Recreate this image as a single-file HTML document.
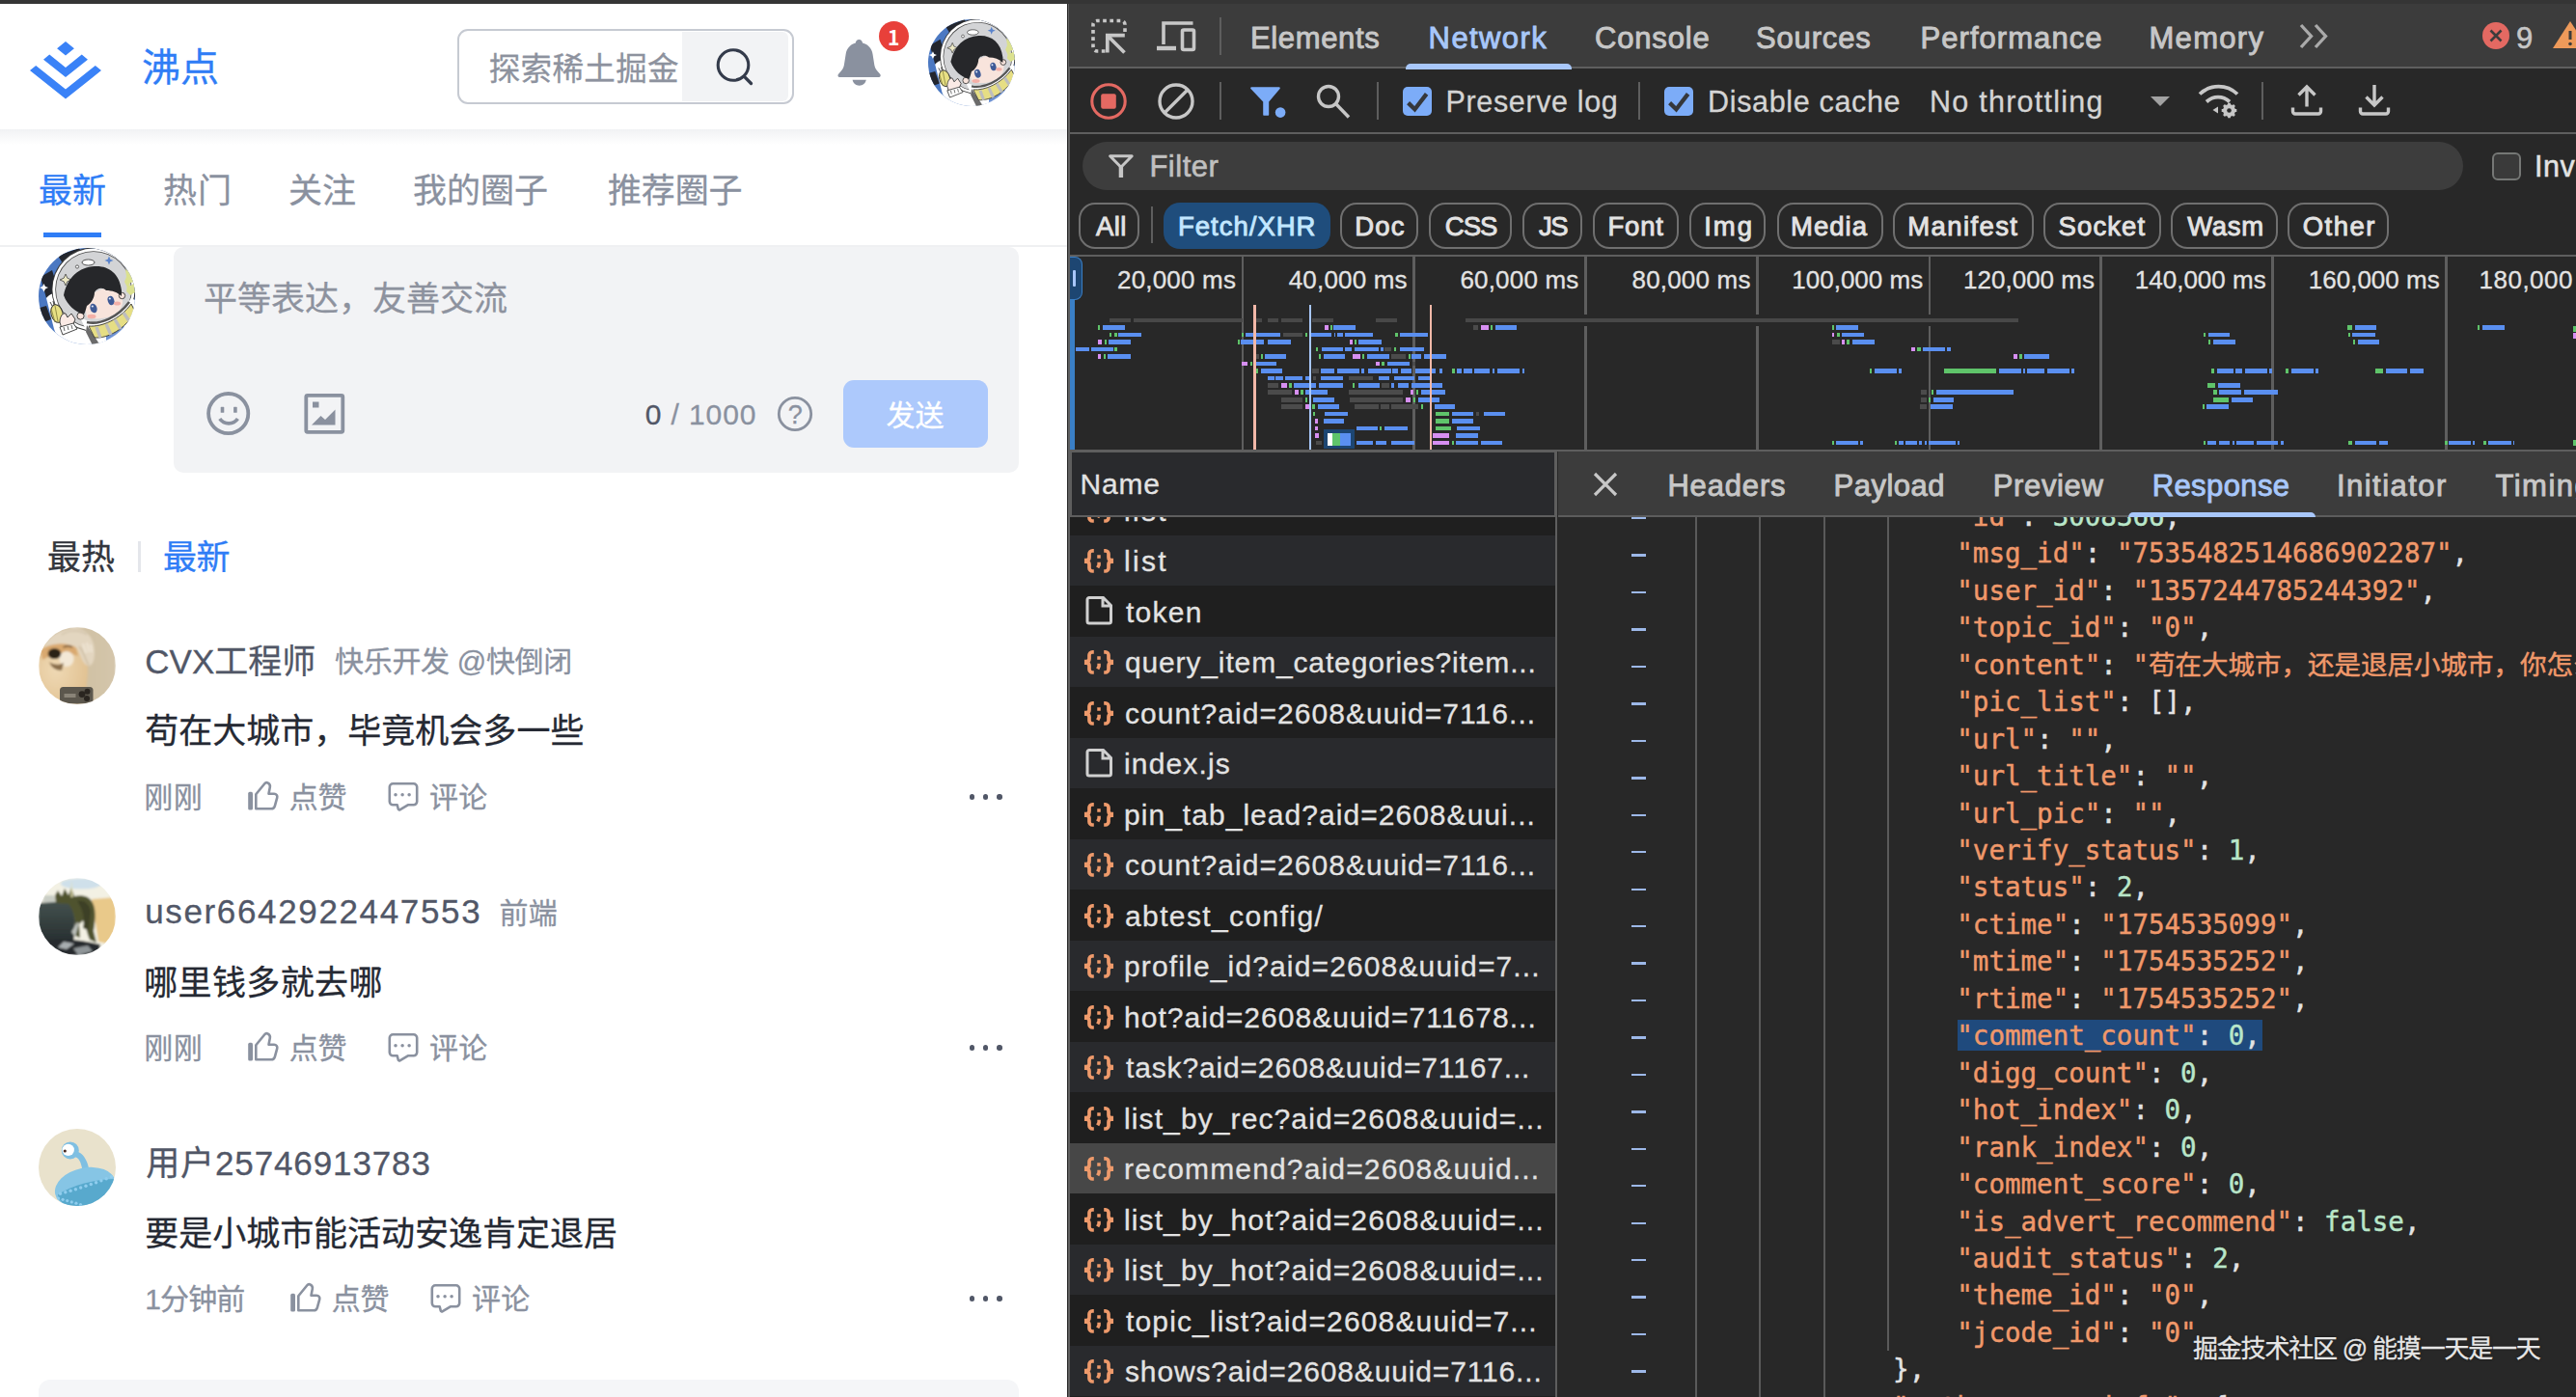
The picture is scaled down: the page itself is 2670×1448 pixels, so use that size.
<!DOCTYPE html><html lang="zh"><head><meta charset="utf-8"><title>沸点</title><style>html,body{margin:0;padding:0}body{width:2670px;height:1448px;overflow:hidden;background:#fff;position:relative}.t{position:absolute;white-space:pre;line-height:60px;height:60px;-webkit-text-stroke:.3px;font-family:'Liberation Sans','Noto Sans CJK SC',sans-serif}.m{font-family:'DejaVu Sans Mono','Liberation Mono','Noto Sans CJK SC',monospace}.k{font-family:'Noto Sans CJK SC',sans-serif}.c2{color:#515767}</style></head><body>
<div style="position:absolute;left:0;top:0;width:2670px;height:4px;background:#353535"></div>
<div style="position:absolute;left:0;top:134px;width:1106px;height:16px;background:linear-gradient(#f1f2f4,#fff)"></div>
<svg style="position:absolute;left:30.5px;top:43px" width="74" height="59.5" viewBox="0 0 35.18 28" preserveAspectRatio="none"><path fill="#3a82f7" d="M17.5875 6.77268L21.8232 3.40505L17.5875 0.00748237L17.5837 0L13.3555 3.39757L17.5837 6.76894L17.5875 6.77268ZM17.5863 17.3955H17.59L28.5161 8.77432L25.5526 6.39453L17.59 12.6808H17.5863L17.5825 12.6845L9.61993 6.40201L6.66016 8.78181L17.5825 17.3992L17.5863 17.3955ZM17.5828 23.2891L17.5865 23.2854L32.2133 11.7456L35.1768 14.1254L28.5238 19.3752L17.5865 28L0.284376 14.3574L0 14.1291L2.95977 11.7531L17.5828 23.2891Z"/></svg>
<div style="position:absolute;left:474px;top:29.5px;width:349px;height:78.5px;box-sizing:border-box;border:2.2px solid #c6cad2;border-radius:11px;background:#fff"></div>
<div style="position:absolute;left:707px;top:32.5px;width:109.5px;height:72.5px;background:#f2f3f5;border-radius:0 6px 6px 0"></div>
<svg style="position:absolute;left:736px;top:44px" width="50" height="50" viewBox="0 0 50 50"><circle cx="24" cy="23.5" r="15.8" fill="none" stroke="#343b4b" stroke-width="3.1"/><path d="M35.200 35.200 L42.500 42.500" stroke="#343b4b" stroke-width="3.300" stroke-linecap="round"/></svg>
<svg style="position:absolute;left:866px;top:39px" width="48" height="52" viewBox="0 0 48 52"><path fill="#8a919f" d="M24.400 2c2 0 3.500 1.500 3.600 3.600 5.800 1.500 9.600 5.600 10.600 11.800l1.700 10.800c.4 2.600 1.400 4.600 3.200 6.600l2.600 2.900c1.300 1.500.4 3.300-1.500 3.300H4.600c-1.900 0-2.800-1.800-1.500-3.300l2.600-2.900c1.800-2 2.800-4 3.200-6.600l1.700-10.800c1-6.200 4.800-10.300 10.200-11.800C20.900 3.500 22.400 2 24.400 2ZM17.600 43.800h14.200c-.8 3.700-3.400 5.900-7.100 5.900s-6.300-2.200-7.100-5.900Z"/></svg>
<div style="position:absolute;left:911.1px;top:22.3px;width:30.8px;height:30.8px;border-radius:50%;background:#e8403a"></div>
<svg style="position:absolute;left:962px;top:20px" width="90" height="90" viewBox="0 0 100 100"><defs><clipPath id="cb1"><circle cx="50" cy="50" r="50"/></clipPath></defs><g clip-path="url(#cb1)"><rect width="100" height="100" fill="#4b78c2"/><path d="M42 0L20 8l5 8 20-10Z" fill="#23262e"/><path d="M2 30l12-7 7 22-13 7Z" fill="#23262e"/><path d="M1 62l7-2 5 14-8 3Z" fill="#23262e"/><path d="M5.500 37l1.500 3 3 1-3 1.500-1.500 3-1.500-3-3-1.500 3-1Z" fill="#fff"/><path d="M8 52C11 48 16 46 19 48L50 74 100 72V100H22L16 84Z" fill="#fff"/><path d="M9 84l3 3 4-1-2 4 2 4-4-1-3 3Z" fill="#d9e08a"/><circle cx="57" cy="43" r="43.500" fill="#3a3a3a"/><circle cx="57" cy="43" r="42.600" fill="#fff"/><circle cx="57" cy="43" r="39.800" fill="#4a4a4a"/><circle cx="57" cy="43" r="39" fill="#d3d4d6"/><ellipse cx="51.500" cy="15" rx="6.500" ry="3" fill="#fff" stroke="#444" stroke-width=".9"/><circle cx="40" cy="19.500" r="1.600" fill="#fff" stroke="#444" stroke-width=".8"/><path d="M73 8.500l1.300 3.200 3.200 1.300-3.200 1.300-1.300 3.200-1.300-3.200-3.200-1.300 3.200-1.300Z" fill="#5b84cc"/><path d="M28 27l1.800 4.200 4.200 1.800-4.200 1.800L28 39l-1.800-4.200L22 33l4.200-1.800Z" fill="#ece8c4" stroke="#555" stroke-width=".9"/><path d="M90 22l4 3 5-1-1 6 2 5-5 1-3 5-3-6 2-5Z" fill="#dbe18f"/><path d="M92 38l4 1 3-3 1 10-5 3-4-4Z" fill="#dbe18f"/><path d="M43 72c16 10 40 2 53-20l4 2v46H56Z" fill="#fff"/><path d="M70 85c6-4 14-5 21-3l-3 12-18 3Z" fill="#6d92d4"/><path d="M50 80l8 12 6 9h-8l-7-14Z" fill="#6b6b6b"/><path d="M48 60C52 50 60 42 72 42c8 0 14 4 15 12 1 8-5 14-13 17-8 3-18 3-24 1Z" fill="#f8e4dc"/><circle cx="43.500" cy="70.500" r="3.600" fill="#f8e4dc" stroke="#333" stroke-width=".9"/><circle cx="86.500" cy="49.500" r="3.200" fill="#f8e4dc" stroke="#333" stroke-width=".9"/><ellipse cx="57" cy="62.500" rx="3.500" ry="4.900" fill="#3f5a96" transform="rotate(-18 57 62.500)"/><ellipse cx="75" cy="54.500" rx="3.300" ry="4.700" fill="#3f5a96" transform="rotate(-18 75 54.500)"/><circle cx="55.800" cy="60.500" r="1.100" fill="#dfe8f8"/><circle cx="73.800" cy="52.500" r="1.100" fill="#dfe8f8"/><ellipse cx="55" cy="71" rx="4.500" ry="2.200" fill="#f3b0a8"/><ellipse cx="81.500" cy="57.500" rx="3.600" ry="2" fill="#f3b0a8"/><path d="M26 49C30 30 42 20 58 19c14-1 26 7 28 25v6c-4-4-10-6-16-6-4-4-10-2-12 2 0 6-4 12-8 14-1 4-2 7-3 9-9-3-17-9-21-20Z" fill="#26272a"/><path d="M50 77c14 3 32-5 44-21" fill="none" stroke="#555" stroke-width="2.600"/><path d="M52 81c14 1 32-7 44-23l4 8C90 84 72 94 58 93Z" fill="#e6de84" stroke="#333" stroke-width=".9"/><path d="M60 82l4 11M70 79l5 11M79 74l6 10M88 67l6 9" stroke="#bdbdbd" stroke-width="3.400"/><ellipse cx="19" cy="68" rx="6" ry="9.500" fill="#e8e084" stroke="#333" stroke-width="1" transform="rotate(-15 19 68)"/><path d="M17 60l3 16M13 63l4 14" stroke="#8a8440" stroke-width=".9"/><path d="M12 56l2 4M15 55l1 4" stroke="#333" stroke-width=".9"/><path d="M22 77c0-6 3-10 6-9l2 4 4-4 4 6-3 7-11 3Z" fill="#fbeae5" stroke="#333" stroke-width=".9"/><path d="M22 82l14-4 4 6-15 6Z" fill="#fff" stroke="#333" stroke-width=".9"/><path d="M26 82l1 4M30 81l1 4M34 80l1 4" stroke="#555" stroke-width=".9"/></g></svg>
<div style="position:absolute;left:45px;top:240.5px;width:59.5px;height:5px;background:#2f7df6"></div>
<div style="position:absolute;left:0;top:253.5px;width:1106px;height:2px;background:#eff0f2"></div>
<svg style="position:absolute;left:40px;top:257px" width="100" height="100" viewBox="0 0 100 100"><defs><clipPath id="cb2"><circle cx="50" cy="50" r="50"/></clipPath></defs><g clip-path="url(#cb2)"><rect width="100" height="100" fill="#4b78c2"/><path d="M42 0L20 8l5 8 20-10Z" fill="#23262e"/><path d="M2 30l12-7 7 22-13 7Z" fill="#23262e"/><path d="M1 62l7-2 5 14-8 3Z" fill="#23262e"/><path d="M5.500 37l1.500 3 3 1-3 1.500-1.500 3-1.500-3-3-1.500 3-1Z" fill="#fff"/><path d="M8 52C11 48 16 46 19 48L50 74 100 72V100H22L16 84Z" fill="#fff"/><path d="M9 84l3 3 4-1-2 4 2 4-4-1-3 3Z" fill="#d9e08a"/><circle cx="57" cy="43" r="43.500" fill="#3a3a3a"/><circle cx="57" cy="43" r="42.600" fill="#fff"/><circle cx="57" cy="43" r="39.800" fill="#4a4a4a"/><circle cx="57" cy="43" r="39" fill="#d3d4d6"/><ellipse cx="51.500" cy="15" rx="6.500" ry="3" fill="#fff" stroke="#444" stroke-width=".9"/><circle cx="40" cy="19.500" r="1.600" fill="#fff" stroke="#444" stroke-width=".8"/><path d="M73 8.500l1.300 3.200 3.200 1.300-3.200 1.300-1.300 3.200-1.300-3.200-3.200-1.300 3.200-1.300Z" fill="#5b84cc"/><path d="M28 27l1.800 4.200 4.200 1.800-4.200 1.800L28 39l-1.800-4.200L22 33l4.200-1.800Z" fill="#ece8c4" stroke="#555" stroke-width=".9"/><path d="M90 22l4 3 5-1-1 6 2 5-5 1-3 5-3-6 2-5Z" fill="#dbe18f"/><path d="M92 38l4 1 3-3 1 10-5 3-4-4Z" fill="#dbe18f"/><path d="M43 72c16 10 40 2 53-20l4 2v46H56Z" fill="#fff"/><path d="M70 85c6-4 14-5 21-3l-3 12-18 3Z" fill="#6d92d4"/><path d="M50 80l8 12 6 9h-8l-7-14Z" fill="#6b6b6b"/><path d="M48 60C52 50 60 42 72 42c8 0 14 4 15 12 1 8-5 14-13 17-8 3-18 3-24 1Z" fill="#f8e4dc"/><circle cx="43.500" cy="70.500" r="3.600" fill="#f8e4dc" stroke="#333" stroke-width=".9"/><circle cx="86.500" cy="49.500" r="3.200" fill="#f8e4dc" stroke="#333" stroke-width=".9"/><ellipse cx="57" cy="62.500" rx="3.500" ry="4.900" fill="#3f5a96" transform="rotate(-18 57 62.500)"/><ellipse cx="75" cy="54.500" rx="3.300" ry="4.700" fill="#3f5a96" transform="rotate(-18 75 54.500)"/><circle cx="55.800" cy="60.500" r="1.100" fill="#dfe8f8"/><circle cx="73.800" cy="52.500" r="1.100" fill="#dfe8f8"/><ellipse cx="55" cy="71" rx="4.500" ry="2.200" fill="#f3b0a8"/><ellipse cx="81.500" cy="57.500" rx="3.600" ry="2" fill="#f3b0a8"/><path d="M26 49C30 30 42 20 58 19c14-1 26 7 28 25v6c-4-4-10-6-16-6-4-4-10-2-12 2 0 6-4 12-8 14-1 4-2 7-3 9-9-3-17-9-21-20Z" fill="#26272a"/><path d="M50 77c14 3 32-5 44-21" fill="none" stroke="#555" stroke-width="2.600"/><path d="M52 81c14 1 32-7 44-23l4 8C90 84 72 94 58 93Z" fill="#e6de84" stroke="#333" stroke-width=".9"/><path d="M60 82l4 11M70 79l5 11M79 74l6 10M88 67l6 9" stroke="#bdbdbd" stroke-width="3.400"/><ellipse cx="19" cy="68" rx="6" ry="9.500" fill="#e8e084" stroke="#333" stroke-width="1" transform="rotate(-15 19 68)"/><path d="M17 60l3 16M13 63l4 14" stroke="#8a8440" stroke-width=".9"/><path d="M12 56l2 4M15 55l1 4" stroke="#333" stroke-width=".9"/><path d="M22 77c0-6 3-10 6-9l2 4 4-4 4 6-3 7-11 3Z" fill="#fbeae5" stroke="#333" stroke-width=".9"/><path d="M22 82l14-4 4 6-15 6Z" fill="#fff" stroke="#333" stroke-width=".9"/><path d="M26 82l1 4M30 81l1 4M34 80l1 4" stroke="#555" stroke-width=".9"/></g></svg>
<div style="position:absolute;left:179.5px;top:256px;width:876.5px;height:234px;background:#f2f3f5;border-radius:10px"></div>
<svg style="position:absolute;left:212px;top:404px" width="50" height="50" viewBox="0 0 50 50"><circle cx="24.7" cy="24.6" r="20.6" fill="none" stroke="#8a919f" stroke-width="3.8"/><rect x="16.700" y="17.800" width="3.600" height="6" rx=".6" fill="#8a919f"/><rect x="30.100" y="17.800" width="3.600" height="6" rx=".6" fill="#8a919f"/><path d="M15.800 30c2.300 3.400 5.200 4.800 9.300 4.800s7-1.400 9.300-4.800" fill="none" stroke="#8a919f" stroke-width="3.700"/></svg>
<svg style="position:absolute;left:313px;top:406px" width="46" height="46" viewBox="0 0 46 46"><rect x="4.300" y="3.800" width="38" height="38" rx="1.500" fill="none" stroke="#8a919f" stroke-width="3.800"/><rect x="11" y="10.500" width="6.500" height="6" fill="#8a919f"/><path d="M10 34.500 L19.500 25 L24 29 L34.500 18.500 V34.500 Z" fill="#8a919f"/></svg>
<svg style="position:absolute;left:803px;top:408px" width="42" height="42" viewBox="0 0 42 42"><circle cx="21" cy="21" r="16.700" fill="none" stroke="#8a919f" stroke-width="2.800"/></svg>
<div style="position:absolute;left:874px;top:394px;width:150px;height:70px;background:#adc9fc;border-radius:11px"></div>
<div style="position:absolute;left:142.5px;top:561px;width:3.5px;height:32px;background:#e4e6eb"></div>
<svg style="position:absolute;left:40px;top:650px" width="80" height="80" viewBox="0 0 80 80"><defs><clipPath id="cd"><circle cx="40" cy="40" r="40"/></clipPath><linearGradient id="gd" x1="0" x2="1"><stop offset="0" stop-color="#cbb999"/><stop offset="1" stop-color="#d4c6ab"/></linearGradient><radialGradient id="gf" cx=".35" cy=".45" r=".7"><stop offset="0" stop-color="#efd9b4"/><stop offset="1" stop-color="#e0c090"/></radialGradient><filter id="bl" x="-10%" y="-10%" width="120%" height="120%"><feGaussianBlur stdDeviation="1.1"/></filter></defs><g clip-path="url(#cd)"><g filter="url(#bl)"><rect width="80" height="80" fill="url(#gd)"/><path d="M0 18C10 14 30 12 44 20c8 8 8 24 6 38l-2 22H0Z" fill="url(#gf)"/><path d="M2 24C12 17 24 15 38 19l3 11C30 25 16 26 4 34Z" fill="#d9a96f"/><ellipse cx="29" cy="33" rx="7.500" ry="8" fill="#f3e8d6"/><ellipse cx="16.500" cy="27.500" rx="6.800" ry="5.600" fill="#2b2119"/><path d="M11 36c4 3 10 4 15 1l-2 8c-6 0-11-3-13-9Z" fill="#8a6e4c"/><path d="M25.500 21c3-1.500 7-1.500 9.500 0" stroke="#4a3420" stroke-width="1.200" fill="none"/><path d="M5 21C9 10 22 2 38 1c12 1 20 11 20 25 0 8-2 14-6 14-6 0-8-10-12-18-8-6-22-6-35-1Z" fill="#e3d6c0"/><path d="M24 8c6-5 18-6 26 0" stroke="#d2c3aa" stroke-width="1.500" fill="none"/><path d="M42 20c5 5 6 14 10 19" stroke="#cdbda2" stroke-width="1.500" fill="none"/><path d="M46 17l3 10M50 16l2 10M54 18l1 8" stroke="#f1e8d8" stroke-width="1.600"/></g><rect x="22" y="62" width="34.500" height="17.500" rx="3.500" fill="#5c574d"/><path d="M26.500 69h12v4h-12Z" fill="#8a8478"/><circle cx="45" cy="69.600" r="3.400" fill="#2a2520"/><circle cx="50.500" cy="66.800" r="3" fill="#2a2520"/><circle cx="50" cy="74" r="3" fill="#2a2520"/></g></svg>
<svg style="position:absolute;left:256px;top:808px" width="34" height="34" viewBox="0 0 34 34"><rect x="1.200" y="12.800" width="4.800" height="18.800" rx="1.600" fill="#8a919f"/><path d="M9.300 30.300V15.200l9-11c.9-1.100 2.300-1.300 3.500-.6 1.600.9 2.400 2.600 2 4.500l-1.300 6.700h5.600c2.300 0 3.700 1.800 3.100 4l-2.400 8.800c-.5 1.700-1.800 2.700-3.600 2.700Z" fill="none" stroke="#8a919f" stroke-width="2.600" stroke-linejoin="round"/></svg>
<svg style="position:absolute;left:401px;top:808.5px" width="34" height="36" viewBox="0 0 34 36"><path d="M6.300 3.300h21.400a3.500 3.500 0 0 1 3.500 3.500v15a3.500 3.500 0 0 1-3.500 3.500H21.800L13.800 30.100c-.9.600-1.900.200-2.100-.800L10.700 25.300H6.300a3.500 3.500 0 0 1-3.500-3.500v-15a3.500 3.500 0 0 1 3.500-3.500Z" fill="none" stroke="#8a919f" stroke-width="2.600" stroke-linejoin="round"/><circle cx="9" cy="14.700" r="1.750" fill="#8a919f"/><circle cx="16.100" cy="14.700" r="1.750" fill="#8a919f"/><circle cx="23.100" cy="14.700" r="1.750" fill="#8a919f"/></svg>
<div style="position:absolute;left:1004.6px;top:823.3px;width:5.4px;height:5.4px;border-radius:50%;background:#515767"></div>
<div style="position:absolute;left:1018.9px;top:823.3px;width:5.4px;height:5.4px;border-radius:50%;background:#515767"></div>
<div style="position:absolute;left:1033.2px;top:823.3px;width:5.4px;height:5.4px;border-radius:50%;background:#515767"></div>
<svg style="position:absolute;left:40px;top:910px" width="80" height="80" viewBox="0 0 80 80"><defs><clipPath id="cl"><circle cx="40" cy="40" r="40"/></clipPath><linearGradient id="gw" x1="0" x2="0" y1="0" y2="1"><stop offset="0" stop-color="#44524f"/><stop offset="1" stop-color="#232a2c"/></linearGradient><filter id="bl2" x="-10%" y="-10%" width="120%" height="120%"><feGaussianBlur stdDeviation=".9"/></filter></defs><g clip-path="url(#cl)"><g filter="url(#bl2)"><rect width="80" height="80" fill="#f3f1e4"/><ellipse cx="44" cy="6" rx="21" ry="5.500" fill="#cfe0ea"/><path d="M55 22l25-2v50l-18-4Z" fill="#e9c98a"/><path d="M6 18h10l2 7H4Z" fill="#c9cdc5"/><path d="M0 26l34-2 4 20-2 26-36 2Z" fill="url(#gw)"/><path d="M17 18l3-5 4 6 3-8 4 7 3-8 3 9c8-2 15 0 18 5 5 7 4 20 2 31l3 12-7-3c-3-7-4-15-7-20l-4 4 1 14-5-2c1-14-1-26-7-33l-13-1Z" fill="#50532f"/><path d="M40 24c6-2 12 2 14 10l-2 20-6-2c2-10 0-20-6-28Z" fill="#3c4127"/><path d="M34 2l1.500 18h-2Z" fill="#e6e2b0"/><path d="M0 67c20-6 40-4 64 2l-2 11H0Z" fill="#272b2d"/><path d="M26 66l11 2-8 6-9-2Z" fill="#a8adb0"/><path d="M36 73l15-3 5 6-15 4Z" fill="#8f9598"/><path d="M34 56l6-10 2 1-4 14Z" fill="#b9bdb8"/></g></g></svg>
<svg style="position:absolute;left:256px;top:1068px" width="34" height="34" viewBox="0 0 34 34"><rect x="1.200" y="12.800" width="4.800" height="18.800" rx="1.600" fill="#8a919f"/><path d="M9.300 30.300V15.200l9-11c.9-1.100 2.300-1.300 3.500-.6 1.600.9 2.400 2.600 2 4.500l-1.300 6.700h5.600c2.300 0 3.700 1.800 3.100 4l-2.400 8.800c-.5 1.700-1.800 2.700-3.600 2.700Z" fill="none" stroke="#8a919f" stroke-width="2.600" stroke-linejoin="round"/></svg>
<svg style="position:absolute;left:401px;top:1068.5px" width="34" height="36" viewBox="0 0 34 36"><path d="M6.300 3.300h21.400a3.500 3.500 0 0 1 3.500 3.500v15a3.500 3.500 0 0 1-3.500 3.500H21.800L13.800 30.100c-.9.600-1.900.200-2.100-.800L10.700 25.300H6.300a3.500 3.500 0 0 1-3.500-3.500v-15a3.500 3.500 0 0 1 3.500-3.500Z" fill="none" stroke="#8a919f" stroke-width="2.600" stroke-linejoin="round"/><circle cx="9" cy="14.700" r="1.750" fill="#8a919f"/><circle cx="16.100" cy="14.700" r="1.750" fill="#8a919f"/><circle cx="23.100" cy="14.700" r="1.750" fill="#8a919f"/></svg>
<div style="position:absolute;left:1004.6px;top:1083.3px;width:5.4px;height:5.4px;border-radius:50%;background:#515767"></div>
<div style="position:absolute;left:1018.9px;top:1083.3px;width:5.4px;height:5.4px;border-radius:50%;background:#515767"></div>
<div style="position:absolute;left:1033.2px;top:1083.3px;width:5.4px;height:5.4px;border-radius:50%;background:#515767"></div>
<svg style="position:absolute;left:40px;top:1170px" width="80" height="80" viewBox="0 0 80 80"><defs><clipPath id="ca"><circle cx="40" cy="40" r="40"/></clipPath></defs><g clip-path="url(#ca)"><rect width="80" height="80" fill="#e9e2cc"/><path d="M36 29c6 0 8 6 9.500 14h7C51 35 48 27 41 24Z" fill="#7fbfe2"/><circle cx="32.800" cy="22.400" r="9" fill="#7fbfe2"/><circle cx="30.700" cy="21.900" r="6.200" fill="#fff"/><circle cx="27.300" cy="23" r="1.600" fill="#4a2a20"/><ellipse cx="48.500" cy="61" rx="32" ry="20.500" fill="#86c5e5" transform="rotate(-12 48.500 61)"/><path d="M20 68C36 58 60 52 80 52c2 14-14 30-36 30-14 0-24-6-24-14Z" fill="#58a9cd"/><circle cx="22.5" cy="67.3" r="1.700" fill="#8fcdee"/><circle cx="27.8" cy="65.8" r="1.700" fill="#8fcdee"/><circle cx="33.1" cy="64.3" r="1.700" fill="#8fcdee"/><circle cx="38.4" cy="62.7" r="1.700" fill="#8fcdee"/><circle cx="43.7" cy="61.0" r="1.700" fill="#8fcdee"/><circle cx="49.0" cy="59.3" r="1.700" fill="#8fcdee"/><circle cx="54.3" cy="57.5" r="1.700" fill="#8fcdee"/><circle cx="59.6" cy="55.7" r="1.700" fill="#8fcdee"/><circle cx="64.9" cy="53.8" r="1.700" fill="#8fcdee"/><circle cx="70.2" cy="51.8" r="1.700" fill="#8fcdee"/><circle cx="75.5" cy="49.8" r="1.700" fill="#8fcdee"/><circle cx="20.5" cy="72.0" r="1.600" fill="#8fcdee"/><circle cx="25.1" cy="73.3" r="1.600" fill="#8fcdee"/><circle cx="29.7" cy="74.6" r="1.600" fill="#8fcdee"/><circle cx="34.3" cy="75.9" r="1.600" fill="#8fcdee"/><circle cx="38.9" cy="77.2" r="1.600" fill="#8fcdee"/><circle cx="43.5" cy="78.5" r="1.600" fill="#8fcdee"/></g></svg>
<svg style="position:absolute;left:300px;top:1328px" width="34" height="34" viewBox="0 0 34 34"><rect x="1.200" y="12.800" width="4.800" height="18.800" rx="1.600" fill="#8a919f"/><path d="M9.300 30.300V15.200l9-11c.9-1.100 2.300-1.300 3.500-.6 1.600.9 2.400 2.600 2 4.500l-1.300 6.700h5.600c2.300 0 3.700 1.800 3.100 4l-2.400 8.800c-.5 1.700-1.800 2.700-3.600 2.700Z" fill="none" stroke="#8a919f" stroke-width="2.600" stroke-linejoin="round"/></svg>
<svg style="position:absolute;left:445px;top:1328.5px" width="34" height="36" viewBox="0 0 34 36"><path d="M6.300 3.300h21.400a3.500 3.500 0 0 1 3.500 3.500v15a3.500 3.500 0 0 1-3.500 3.500H21.800L13.800 30.100c-.9.600-1.900.200-2.100-.800L10.700 25.300H6.300a3.500 3.500 0 0 1-3.500-3.500v-15a3.500 3.500 0 0 1 3.500-3.500Z" fill="none" stroke="#8a919f" stroke-width="2.600" stroke-linejoin="round"/><circle cx="9" cy="14.700" r="1.750" fill="#8a919f"/><circle cx="16.100" cy="14.700" r="1.750" fill="#8a919f"/><circle cx="23.100" cy="14.700" r="1.750" fill="#8a919f"/></svg>
<div style="position:absolute;left:1004.6px;top:1343.3px;width:5.4px;height:5.4px;border-radius:50%;background:#515767"></div>
<div style="position:absolute;left:1018.9px;top:1343.3px;width:5.4px;height:5.4px;border-radius:50%;background:#515767"></div>
<div style="position:absolute;left:1033.2px;top:1343.3px;width:5.4px;height:5.4px;border-radius:50%;background:#515767"></div>
<div style="position:absolute;left:40px;top:1430px;width:1016px;height:40px;background:#f5f6f8;border-radius:12px"></div>
<div class="t" style="left:147.0px;top:39.5px;color:#2f7df6;font-size:40px;">沸点</div>
<div class="t" style="left:506.7px;top:42.0px;color:#8d929e;font-size:32.5px;letter-spacing:0.380px;">探索稀土掘金</div>
<div class="t k" style="left:919.9px;top:8.1px;color:#fff;font-size:21px;font-weight:700;-webkit-text-stroke:0;">1</div>
<div class="t" style="left:40.0px;top:168.0px;color:#2f7df6;font-size:35px;">最新</div>
<div class="t" style="left:169.0px;top:168.0px;color:#8a919f;font-size:35px;letter-spacing:1.000px;">热门</div>
<div class="t" style="left:299.0px;top:168.0px;color:#8a919f;font-size:35px;">关注</div>
<div class="t" style="left:428.0px;top:168.0px;color:#8a919f;font-size:35px;">我的圈子</div>
<div class="t" style="left:630.0px;top:168.0px;color:#8a919f;font-size:35px;letter-spacing:-0.167px;">推荐圈子</div>
<div class="t" style="left:211.0px;top:280.0px;color:#8d929e;font-size:35px;">平等表达，友善交流</div>
<div class="t" style="left:668.8px;top:399.8px;color:#8a919f;font-size:30px;letter-spacing:0.886px;"><span class="c2">0</span> / 1000</div>
<div class="t" style="left:816.7px;top:399.8px;color:#8a919f;font-size:27px;">?</div>
<div class="t" style="left:918.5px;top:400.5px;color:#fff;font-size:30px;">发送</div>
<div class="t" style="left:49.0px;top:548.0px;color:#33363d;font-size:35px;">最热</div>
<div class="t" style="left:169.0px;top:548.0px;color:#2f7df6;font-size:35px;letter-spacing:-0.500px;">最新</div>
<div class="t" style="left:150.2px;top:656.1px;color:#515767;font-size:35px;letter-spacing:0.040px;">CVX工程师</div>
<div class="t" style="left:347.0px;top:656.2px;color:#8a919f;font-size:30px;letter-spacing:-0.312px;">快乐开发 @快倒闭</div>
<div class="t" style="left:150.2px;top:728.0px;color:#252933;font-size:35px;letter-spacing:0.017px;">苟在大城市，毕竟机会多一些</div>
<div class="t" style="left:149.2px;top:797.3px;color:#8a919f;font-size:30px;letter-spacing:0.600px;">刚刚</div>
<div class="t" style="left:299.7px;top:797.3px;color:#8a919f;font-size:30px;letter-spacing:-0.100px;">点赞</div>
<div class="t" style="left:445.0px;top:797.3px;color:#8a919f;font-size:30px;letter-spacing:0.300px;">评论</div>
<div class="t" style="left:150.2px;top:914.6px;color:#515767;font-size:35px;letter-spacing:1.644px;">user6642922447553</div>
<div class="t" style="left:517.4px;top:916.7px;color:#8a919f;font-size:30px;letter-spacing:0.300px;">前端</div>
<div class="t" style="left:149.2px;top:988.5px;color:#252933;font-size:35px;letter-spacing:0.367px;">哪里钱多就去哪</div>
<div class="t" style="left:149.2px;top:1057.3px;color:#8a919f;font-size:30px;letter-spacing:0.600px;">刚刚</div>
<div class="t" style="left:299.7px;top:1057.3px;color:#8a919f;font-size:30px;letter-spacing:-0.100px;">点赞</div>
<div class="t" style="left:445.0px;top:1057.3px;color:#8a919f;font-size:30px;letter-spacing:0.300px;">评论</div>
<div class="t" style="left:151.2px;top:1176.1px;color:#515767;font-size:35px;letter-spacing:0.883px;">用户25746913783</div>
<div class="t" style="left:150.2px;top:1248.5px;color:#252933;font-size:35px;letter-spacing:-0.015px;">要是小城市能活动安逸肯定退居</div>
<div class="t" style="left:150.2px;top:1317.3px;color:#8a919f;font-size:30px;letter-spacing:-0.867px;">1分钟前</div>
<div class="t" style="left:343.7px;top:1317.3px;color:#8a919f;font-size:30px;letter-spacing:-0.100px;">点赞</div>
<div class="t" style="left:489.0px;top:1317.3px;color:#8a919f;font-size:30px;letter-spacing:0.300px;">评论</div>
<div style="position:absolute;left:1106px;top:4px;width:1564px;height:1444px;background:#282828;"></div>
<div style="position:absolute;left:1107px;top:4px;width:2px;height:1444px;background:#606060;"></div>
<div style="position:absolute;left:1108px;top:4px;width:1562px;height:65.5px;background:#3c3c3c;"></div>
<div style="position:absolute;left:1108px;top:69.3px;width:1562px;height:2px;background:#5e5e5e;"></div>
<div style="position:absolute;left:1108px;top:137px;width:1562px;height:2px;background:#5e5e5e;"></div>
<div style="position:absolute;left:1108px;top:263.5px;width:1562px;height:2px;background:#5e5e5e;"></div>
<svg style="position:absolute;left:1128px;top:16px" width="44" height="44" viewBox="0 0 44 44" fill="none" stroke="#c7c7c7"><path d="M17.500 37H9a4 4 0 0 1-4-4V9.500a4 4 0 0 1 4-4h25a4 4 0 0 1 4 4V17" stroke-width="3.600" stroke-dasharray="3.700 3.500"/><path d="M20 21l17.500 17.500M19.800 38.500V20.600h18" stroke-width="3.700"/></svg>
<svg style="position:absolute;left:1196px;top:18px" width="48" height="40" viewBox="0 0 48 40" fill="none" stroke="#c7c7c7" stroke-width="3.600"><path d="M10 28V6h30.500"/><path d="M3 32h20" stroke-width="4.400"/><rect x="29.500" y="13" width="12" height="20.500" rx="1.500"/></svg>
<div style="position:absolute;left:1264px;top:18px;width:2px;height:38.5px;background:#5e5e5e;"></div>
<div style="position:absolute;left:1457px;top:66px;width:171.5px;height:5.5px;background:#a8c7fa;border-radius:5px 5px 0 0"></div>
<svg style="position:absolute;left:2380px;top:22px" width="40" height="32" viewBox="0 0 40 32" fill="none" stroke="#aaa" stroke-width="3.300"><path d="M5 4l10.500 11.500L5 27M20 4l10.500 11.500L20 27"/></svg>
<svg style="position:absolute;left:2572px;top:22px" width="30" height="30" viewBox="0 0 30 30"><circle cx="15" cy="15" r="14" fill="#e46962"/><path d="M9.500 9.500l11 11M20.500 9.500l-11 11" stroke="#3c3c3c" stroke-width="2.600"/></svg>
<svg style="position:absolute;left:2644px;top:20px" width="40" height="32" viewBox="0 0 40 32"><path d="M20 2L38 30H2Z" fill="#ee9a5a"/><path d="M20 12v9" stroke="#3c3c3c" stroke-width="3"/><circle cx="20" cy="25.500" r="1.800" fill="#3c3c3c"/></svg>
<svg style="position:absolute;left:1128px;top:84px" width="42" height="42" viewBox="0 0 42 42"><circle cx="21" cy="21" r="17.200" fill="none" stroke="#e46962" stroke-width="3.100"/><rect x="13.200" y="13.200" width="15.600" height="15.600" rx="2" fill="#e46962"/></svg>
<svg style="position:absolute;left:1198px;top:84px" width="42" height="42" viewBox="0 0 42 42" fill="none" stroke="#c7c7c7" stroke-width="3.400"><circle cx="21" cy="21" r="17"/><path d="M9 33L33 9"/></svg>
<div style="position:absolute;left:1264px;top:85px;width:2px;height:39px;background:#5e5e5e;"></div>
<svg style="position:absolute;left:1294px;top:88px" width="40" height="36" viewBox="0 0 40 36"><path d="M3.300 2.200h28.400c1 0 1.500 1 .9 1.800L21.200 17.500V31c0 .4-.3.700-.7.700h-4.600c-.4 0-.7-.3-.7-.7V17.500L2.400 4C1.800 3.200 2.300 2.200 3.300 2.200Z" fill="#7cacf8"/><circle cx="33.100" cy="28.600" r="5.300" fill="#7cacf8"/></svg>
<svg style="position:absolute;left:1360px;top:84px" width="44" height="44" viewBox="0 0 44 44" fill="none" stroke="#c7c7c7" stroke-width="3.400"><circle cx="17" cy="16" r="10.500"/><path d="M24.500 23.500L38 37.500"/></svg>
<div style="position:absolute;left:1427px;top:85px;width:2px;height:39px;background:#5e5e5e;"></div>
<svg style="position:absolute;left:1454px;top:90px" width="30" height="30" viewBox="0 0 30 30"><rect width="30" height="30" rx="5" fill="#7cacf8"/><path d="M5.600 16.600l6.800 6.600L24.600 7.400" fill="none" stroke="#35373b" stroke-width="4.300"/></svg>
<svg style="position:absolute;left:1725px;top:90px" width="30" height="30" viewBox="0 0 30 30"><rect width="30" height="30" rx="5" fill="#7cacf8"/><path d="M5.600 16.600l6.800 6.600L24.600 7.400" fill="none" stroke="#35373b" stroke-width="4.300"/></svg>
<div style="position:absolute;left:1698px;top:85px;width:2px;height:39px;background:#5e5e5e;"></div>
<svg style="position:absolute;left:2229px;top:100px" width="20" height="10" viewBox="0 0 20 10"><path d="M0 0h20L10 10Z" fill="#a2a2a2"/></svg>
<svg style="position:absolute;left:2277px;top:84px" width="46" height="42" viewBox="0 0 46 42"><g fill="none" stroke="#c7c7c7" stroke-width="3.400"><path d="M3 13.500c11-10.500 28-10.500 39 0" stroke-width="3.800"/><path d="M10 21.500c7-6.500 17-6.500 24 0" stroke-width="3.800"/></g><path d="M16.500 30l5.500-3.500v7Z" fill="#c7c7c7"/><circle cx="33.500" cy="30.500" r="4.800" fill="none" stroke="#c7c7c7" stroke-width="3.400"/><path d="M33.500 22.700v15.600M25.700 30.500h15.600M28 25l11 11M39 25l-11 11" stroke="#c7c7c7" stroke-width="2.800"/><circle cx="33.500" cy="30.500" r="2.300" fill="#282828"/></svg>
<div style="position:absolute;left:2344px;top:85px;width:2px;height:39px;background:#5e5e5e;"></div>
<svg style="position:absolute;left:2373px;top:86px" width="36" height="36" viewBox="0 0 36 36" fill="none" stroke="#c7c7c7" stroke-width="3.400"><path d="M18 24.500V4M9.500 12.500L18 4l8.500 8.500M3.500 25.500v4a2.500 2.500 0 0 0 2.500 2.500h24a2.500 2.500 0 0 0 2.500-2.500v-4"/></svg>
<svg style="position:absolute;left:2443px;top:86px" width="36" height="36" viewBox="0 0 36 36" fill="none" stroke="#c7c7c7" stroke-width="3.400"><path d="M18 2v20.500M9.500 14.500L18 23l8.500-8.500M3.500 25.500v4a2.500 2.500 0 0 0 2.500 2.500h24a2.500 2.500 0 0 0 2.500-2.500v-4"/></svg>
<div style="position:absolute;left:1121.5px;top:146.8px;width:1431px;height:50.2px;background:#3d3d3d;border-radius:26px"></div>
<svg style="position:absolute;left:1147px;top:158px" width="28" height="28" viewBox="0 0 28 28" fill="none" stroke="#c7c7c7" stroke-width="3"><path d="M3.600 3.700h22.600L14.900 15.200Z" stroke-linejoin="round"/><path d="M14.900 13v13" stroke-width="4.400"/></svg>
<div style="position:absolute;left:2582.7px;top:157.8px;width:30px;height:29px;background:#3a3a3a;box-sizing:border-box;border:2.500px solid #757775;border-radius:6px"></div>
<div style="position:absolute;left:1118px;top:210.3px;width:63px;height:47.6px;background:transparent;box-sizing:border-box;border:2.200px solid #6f6f6f;border-radius:17px"></div>
<div style="position:absolute;left:1206px;top:210.3px;width:172.5999999999999px;height:47.6px;background:#1f4d7c;border-radius:17px"></div>
<div style="position:absolute;left:1389px;top:210.3px;width:81px;height:47.6px;background:transparent;box-sizing:border-box;border:2.200px solid #6f6f6f;border-radius:17px"></div>
<div style="position:absolute;left:1481px;top:210.3px;width:86px;height:47.6px;background:transparent;box-sizing:border-box;border:2.200px solid #6f6f6f;border-radius:17px"></div>
<div style="position:absolute;left:1578px;top:210.3px;width:62px;height:47.6px;background:transparent;box-sizing:border-box;border:2.200px solid #6f6f6f;border-radius:17px"></div>
<div style="position:absolute;left:1651px;top:210.3px;width:89px;height:47.6px;background:transparent;box-sizing:border-box;border:2.200px solid #6f6f6f;border-radius:17px"></div>
<div style="position:absolute;left:1751px;top:210.3px;width:79px;height:47.6px;background:transparent;box-sizing:border-box;border:2.200px solid #6f6f6f;border-radius:17px"></div>
<div style="position:absolute;left:1841.6px;top:210.3px;width:110.10000000000014px;height:47.6px;background:transparent;box-sizing:border-box;border:2.200px solid #6f6f6f;border-radius:17px"></div>
<div style="position:absolute;left:1962px;top:210.3px;width:145.5999999999999px;height:47.6px;background:transparent;box-sizing:border-box;border:2.200px solid #6f6f6f;border-radius:17px"></div>
<div style="position:absolute;left:2118.4px;top:210.3px;width:121.19999999999982px;height:47.6px;background:transparent;box-sizing:border-box;border:2.200px solid #6f6f6f;border-radius:17px"></div>
<div style="position:absolute;left:2250px;top:210.3px;width:110.69999999999982px;height:47.6px;background:transparent;box-sizing:border-box;border:2.200px solid #6f6f6f;border-radius:17px"></div>
<div style="position:absolute;left:2371px;top:210.3px;width:105px;height:47.6px;background:transparent;box-sizing:border-box;border:2.200px solid #6f6f6f;border-radius:17px"></div>
<div style="position:absolute;left:1192.5px;top:214px;width:2px;height:38px;background:#5e5e5e;"></div>
<div class="t" style="left:1296.0px;top:9.7px;color:#c7c7c7;font-size:31px;letter-spacing:0.643px;-webkit-text-stroke:.9px;">Elements</div>
<div class="t" style="left:1480.6px;top:9.7px;color:#a8c7fa;font-size:31px;letter-spacing:1.400px;-webkit-text-stroke:.9px;">Network</div>
<div class="t" style="left:1653.0px;top:9.7px;color:#c7c7c7;font-size:31px;letter-spacing:0.833px;-webkit-text-stroke:.9px;">Console</div>
<div class="t" style="left:1820.0px;top:9.7px;color:#c7c7c7;font-size:31px;letter-spacing:0.833px;-webkit-text-stroke:.9px;">Sources</div>
<div class="t" style="left:1990.5px;top:9.7px;color:#c7c7c7;font-size:31px;letter-spacing:1.050px;-webkit-text-stroke:.9px;">Performance</div>
<div class="t" style="left:2227.5px;top:9.7px;color:#c7c7c7;font-size:31px;letter-spacing:1.300px;-webkit-text-stroke:.9px;">Memory</div>
<div class="t" style="left:2608.0px;top:9.7px;color:#c7c7c7;font-size:31px;-webkit-text-stroke:.6px;">9</div>
<div class="t" style="left:1498.6px;top:75.2px;color:#d4d4d4;font-size:30.5px;letter-spacing:0.627px;">Preserve log</div>
<div class="t" style="left:1770.0px;top:75.2px;color:#d4d4d4;font-size:30.5px;letter-spacing:0.667px;">Disable cache</div>
<div class="t" style="left:2000.0px;top:75.2px;color:#d4d4d4;font-size:30.5px;letter-spacing:1.250px;">No throttling</div>
<div class="t" style="left:1191.4px;top:142.8px;color:#c0c0c0;font-size:31px;letter-spacing:0.520px;-webkit-text-stroke:.6px;">Filter</div>
<div class="t" style="left:2627.0px;top:141.7px;color:#e3e3e3;font-size:30.5px;letter-spacing:0.500px;-webkit-text-stroke:.5px;">Inv</div>
<div class="t" style="left:1136.0px;top:204.6px;color:#e3e3e3;font-size:27.5px;letter-spacing:0.400px;-webkit-text-stroke:0.9px;">All</div>
<div class="t" style="left:1220.9px;top:204.6px;color:#c2e7ff;font-size:27.5px;letter-spacing:1.012px;-webkit-text-stroke:0.9px;">Fetch/XHR</div>
<div class="t" style="left:1404.2px;top:204.6px;color:#e3e3e3;font-size:27.5px;letter-spacing:1.200px;-webkit-text-stroke:0.9px;">Doc</div>
<div class="t" style="left:1497.7px;top:204.6px;color:#e3e3e3;font-size:27.5px;letter-spacing:-0.900px;-webkit-text-stroke:0.9px;">CSS</div>
<div class="t" style="left:1595.0px;top:204.6px;color:#e3e3e3;font-size:27.5px;letter-spacing:-1.500px;-webkit-text-stroke:0.9px;">JS</div>
<div class="t" style="left:1666.6px;top:204.6px;color:#e3e3e3;font-size:27.5px;letter-spacing:0.733px;-webkit-text-stroke:0.9px;">Font</div>
<div class="t" style="left:1766.2px;top:204.6px;color:#e3e3e3;font-size:27.5px;letter-spacing:2.000px;-webkit-text-stroke:0.9px;">Img</div>
<div class="t" style="left:1856.0px;top:204.6px;color:#e3e3e3;font-size:27.5px;letter-spacing:1.025px;-webkit-text-stroke:0.9px;">Media</div>
<div class="t" style="left:1977.2px;top:204.6px;color:#e3e3e3;font-size:27.5px;letter-spacing:1.400px;-webkit-text-stroke:0.9px;">Manifest</div>
<div class="t" style="left:2133.6px;top:204.6px;color:#e3e3e3;font-size:27.5px;letter-spacing:1.080px;-webkit-text-stroke:0.9px;">Socket</div>
<div class="t" style="left:2267.2px;top:204.6px;color:#e3e3e3;font-size:27.5px;letter-spacing:0.667px;-webkit-text-stroke:0.9px;">Wasm</div>
<div class="t" style="left:2386.7px;top:204.6px;color:#e3e3e3;font-size:27.5px;letter-spacing:1.475px;-webkit-text-stroke:0.9px;">Other</div>
<div style="position:absolute;left:1286.7px;top:266px;width:2.6px;height:200px;background:#5e5e5e;"></div>
<div style="position:absolute;left:1464.4px;top:266px;width:2.6px;height:200px;background:#5e5e5e;"></div>
<div style="position:absolute;left:1642.1000000000001px;top:266px;width:2.6px;height:200px;background:#5e5e5e;"></div>
<div style="position:absolute;left:1820.2px;top:266px;width:2.6px;height:200px;background:#5e5e5e;"></div>
<div style="position:absolute;left:1998.5px;top:266px;width:2.6px;height:200px;background:#5e5e5e;"></div>
<div style="position:absolute;left:2176.2999999999997px;top:266px;width:2.6px;height:200px;background:#5e5e5e;"></div>
<div style="position:absolute;left:2354.0px;top:266px;width:2.6px;height:200px;background:#5e5e5e;"></div>
<div style="position:absolute;left:2534.0px;top:266px;width:2.6px;height:200px;background:#5e5e5e;"></div>
<svg style="position:absolute;left:0;top:0" width="2670" height="470" viewBox="0 0 2670 470" shape-rendering="crispEdges"><rect x="1149.7" y="329.7" width="22.4" height="4.600" fill="#484848"/><rect x="1175.2" y="329.7" width="112.7" height="4.600" fill="#484848"/><rect x="1301.9" y="329.7" width="5.6" height="4.600" fill="#484848"/><rect x="1314.3" y="329.7" width="10.9" height="4.600" fill="#484848"/><rect x="1328.3" y="329.7" width="21.7" height="4.600" fill="#484848"/><rect x="1360.2" y="329.7" width="21.7" height="4.600" fill="#484848"/><rect x="1426.1" y="329.7" width="21.7" height="4.600" fill="#484848"/><rect x="1518.6" y="329.7" width="351.6" height="4.600" fill="#484848"/><rect x="1137.9" y="337.2" width="1.9" height="4.600" fill="#5fc46a"/><rect x="1142.9" y="337.2" width="23.0" height="4.600" fill="#5a8ff0"/><rect x="1373.3" y="337.2" width="3.7" height="4.600" fill="#d78ff2"/><rect x="1378.9" y="337.2" width="1.6" height="4.600" fill="#5fc46a"/><rect x="1382.0" y="337.2" width="23.0" height="4.600" fill="#5a8ff0"/><rect x="1527.0" y="337.2" width="5.3" height="4.600" fill="#4b4b4b"/><rect x="1534.8" y="337.2" width="7.8" height="4.600" fill="#d78ff2"/><rect x="1545.3" y="337.2" width="1.9" height="4.600" fill="#5fc46a"/><rect x="1549.7" y="337.2" width="22.4" height="4.600" fill="#5a8ff0"/><rect x="1150.3" y="344.6" width="1.6" height="4.600" fill="#5fc46a"/><rect x="1155.3" y="344.6" width="2.5" height="4.600" fill="#5fc46a"/><rect x="1159.0" y="344.6" width="23.6" height="4.600" fill="#5a8ff0"/><rect x="1287.3" y="344.6" width="1.6" height="4.600" fill="#5fc46a"/><rect x="1291.0" y="344.6" width="35.7" height="4.600" fill="#5a8ff0"/><rect x="1329.8" y="344.6" width="20.2" height="4.600" fill="#4b4b4b"/><rect x="1353.1" y="344.6" width="1.6" height="4.600" fill="#5fc46a"/><rect x="1357.8" y="344.6" width="21.7" height="4.600" fill="#5a8ff0"/><rect x="1382.6" y="344.6" width="1.6" height="4.600" fill="#5a8ff0"/><rect x="1385.7" y="344.6" width="6.2" height="4.600" fill="#5a8ff0"/><rect x="1393.5" y="344.6" width="29.5" height="4.600" fill="#5a8ff0"/><rect x="1446.3" y="344.6" width="2.2" height="4.600" fill="#5fc46a"/><rect x="1450.9" y="344.6" width="28.6" height="4.600" fill="#5a8ff0"/><rect x="1137.9" y="352.1" width="4.0" height="4.600" fill="#d78ff2"/><rect x="1145.0" y="352.1" width="1.6" height="4.600" fill="#5fc46a"/><rect x="1149.1" y="352.1" width="23.0" height="4.600" fill="#5a8ff0"/><rect x="1283.2" y="352.1" width="1.9" height="4.600" fill="#5fc46a"/><rect x="1286.3" y="352.1" width="23.6" height="4.600" fill="#5a8ff0"/><rect x="1314.3" y="352.1" width="23.3" height="4.600" fill="#5a8ff0"/><rect x="1398.8" y="352.1" width="3.1" height="4.600" fill="#d78ff2"/><rect x="1404.3" y="352.1" width="1.9" height="4.600" fill="#5fc46a"/><rect x="1408.1" y="352.1" width="23.6" height="4.600" fill="#5a8ff0"/><rect x="1114.9" y="359.6" width="13.7" height="4.600" fill="#5a8ff0"/><rect x="1131.1" y="359.6" width="22.4" height="4.600" fill="#5a8ff0"/><rect x="1155.3" y="359.6" width="2.5" height="4.600" fill="#5fc46a"/><rect x="1364.0" y="359.6" width="1.9" height="4.600" fill="#5fc46a"/><rect x="1370.2" y="359.6" width="21.7" height="4.600" fill="#5a8ff0"/><rect x="1394.4" y="359.6" width="6.8" height="4.600" fill="#5a8ff0"/><rect x="1404.3" y="359.6" width="24.8" height="4.600" fill="#5a8ff0"/><rect x="1431.1" y="359.6" width="2.8" height="4.600" fill="#5a8ff0"/><rect x="1435.4" y="359.6" width="6.2" height="4.600" fill="#4b4b4b"/><rect x="1444.7" y="359.6" width="2.5" height="4.600" fill="#5fc46a"/><rect x="1450.9" y="359.6" width="24.8" height="4.600" fill="#5a8ff0"/><rect x="1137.9" y="367.1" width="3.1" height="4.600" fill="#d78ff2"/><rect x="1144.1" y="367.1" width="1.9" height="4.600" fill="#5fc46a"/><rect x="1148.4" y="367.1" width="23.6" height="4.600" fill="#5a8ff0"/><rect x="1301.9" y="367.1" width="3.1" height="4.600" fill="#4b4b4b"/><rect x="1306.5" y="367.1" width="2.2" height="4.600" fill="#5fc46a"/><rect x="1310.6" y="367.1" width="22.4" height="4.600" fill="#5a8ff0"/><rect x="1367.1" y="367.1" width="1.9" height="4.600" fill="#5fc46a"/><rect x="1371.7" y="367.1" width="22.7" height="4.600" fill="#5a8ff0"/><rect x="1401.9" y="367.1" width="7.8" height="4.600" fill="#d78ff2"/><rect x="1412.1" y="367.1" width="2.2" height="4.600" fill="#5fc46a"/><rect x="1416.8" y="367.1" width="23.3" height="4.600" fill="#5a8ff0"/><rect x="1441.6" y="367.1" width="15.5" height="4.600" fill="#4b4b4b"/><rect x="1459.6" y="367.1" width="1.9" height="4.600" fill="#5fc46a"/><rect x="1463.4" y="367.1" width="9.3" height="4.600" fill="#5a8ff0"/><rect x="1476.4" y="367.1" width="22.7" height="4.600" fill="#5a8ff0"/><rect x="1287.3" y="374.5" width="5.9" height="4.600" fill="#d78ff2"/><rect x="1295.7" y="374.5" width="1.9" height="4.600" fill="#5fc46a"/><rect x="1300.3" y="374.5" width="22.7" height="4.600" fill="#5a8ff0"/><rect x="1426.1" y="374.5" width="3.7" height="4.600" fill="#d78ff2"/><rect x="1432.3" y="374.5" width="3.1" height="4.600" fill="#5fc46a"/><rect x="1437.9" y="374.5" width="23.0" height="4.600" fill="#5a8ff0"/><rect x="1464.0" y="374.5" width="2.5" height="4.600" fill="#4b4b4b"/><rect x="1301.9" y="382.0" width="2.2" height="4.600" fill="#5fc46a"/><rect x="1306.5" y="382.0" width="22.7" height="4.600" fill="#5a8ff0"/><rect x="1360.2" y="382.0" width="6.8" height="4.600" fill="#4b4b4b"/><rect x="1368.6" y="382.0" width="14.6" height="4.600" fill="#5a8ff0"/><rect x="1385.7" y="382.0" width="23.3" height="4.600" fill="#5a8ff0"/><rect x="1410.6" y="382.0" width="3.7" height="4.600" fill="#5a8ff0"/><rect x="1418.3" y="382.0" width="23.3" height="4.600" fill="#5a8ff0"/><rect x="1443.2" y="382.0" width="6.2" height="4.600" fill="#5a8ff0"/><rect x="1451.6" y="382.0" width="11.8" height="4.600" fill="#5a8ff0"/><rect x="1466.5" y="382.0" width="21.7" height="4.600" fill="#5a8ff0"/><rect x="1491.9" y="382.0" width="3.1" height="4.600" fill="#5a8ff0"/><rect x="1505.3" y="382.0" width="2.2" height="4.600" fill="#5fc46a"/><rect x="1509.9" y="382.0" width="4.7" height="4.600" fill="#5a8ff0"/><rect x="1516.8" y="382.0" width="8.7" height="4.600" fill="#5a8ff0"/><rect x="1528.0" y="382.0" width="16.1" height="4.600" fill="#5a8ff0"/><rect x="1546.6" y="382.0" width="2.2" height="4.600" fill="#5a8ff0"/><rect x="1551.9" y="382.0" width="23.3" height="4.600" fill="#5a8ff0"/><rect x="1577.6" y="382.0" width="2.2" height="4.600" fill="#5a8ff0"/><rect x="1314.3" y="389.5" width="6.2" height="4.600" fill="#5a8ff0"/><rect x="1322.0" y="389.5" width="7.8" height="4.600" fill="#5a8ff0"/><rect x="1332.3" y="389.5" width="17.7" height="4.600" fill="#5a8ff0"/><rect x="1353.1" y="389.5" width="6.2" height="4.600" fill="#5a8ff0"/><rect x="1360.9" y="389.5" width="3.1" height="4.600" fill="#4b4b4b"/><rect x="1368.6" y="389.5" width="23.3" height="4.600" fill="#5a8ff0"/><rect x="1398.1" y="389.5" width="24.8" height="4.600" fill="#4b4b4b"/><rect x="1429.2" y="389.5" width="10.9" height="4.600" fill="#5a8ff0"/><rect x="1444.7" y="389.5" width="21.7" height="4.600" fill="#5a8ff0"/><rect x="1469.6" y="389.5" width="12.4" height="4.600" fill="#5a8ff0"/><rect x="1314.3" y="396.9" width="10.9" height="4.600" fill="#4b4b4b"/><rect x="1328.3" y="396.9" width="5.3" height="4.600" fill="#d78ff2"/><rect x="1336.0" y="396.9" width="2.5" height="4.600" fill="#5fc46a"/><rect x="1340.7" y="396.9" width="23.3" height="4.600" fill="#5a8ff0"/><rect x="1367.1" y="396.9" width="24.8" height="4.600" fill="#5a8ff0"/><rect x="1401.9" y="396.9" width="2.5" height="4.600" fill="#5fc46a"/><rect x="1407.5" y="396.9" width="22.4" height="4.600" fill="#5a8ff0"/><rect x="1432.3" y="396.9" width="7.8" height="4.600" fill="#4b4b4b"/><rect x="1441.6" y="396.9" width="3.1" height="4.600" fill="#5a8ff0"/><rect x="1449.4" y="396.9" width="10.9" height="4.600" fill="#5a8ff0"/><rect x="1463.4" y="396.9" width="31.1" height="4.600" fill="#5a8ff0"/><rect x="1314.3" y="404.4" width="24.8" height="4.600" fill="#4b4b4b"/><rect x="1341.6" y="404.4" width="4.3" height="4.600" fill="#d78ff2"/><rect x="1348.4" y="404.4" width="2.5" height="4.600" fill="#5fc46a"/><rect x="1353.1" y="404.4" width="23.3" height="4.600" fill="#5a8ff0"/><rect x="1398.1" y="404.4" width="55.9" height="4.600" fill="#4b4b4b"/><rect x="1461.8" y="404.4" width="3.4" height="4.600" fill="#d78ff2"/><rect x="1468.0" y="404.4" width="1.6" height="4.600" fill="#5fc46a"/><rect x="1472.7" y="404.4" width="24.8" height="4.600" fill="#5a8ff0"/><rect x="1328.3" y="411.9" width="21.7" height="4.600" fill="#4b4b4b"/><rect x="1353.1" y="411.9" width="2.2" height="4.600" fill="#5fc46a"/><rect x="1360.9" y="411.9" width="22.4" height="4.600" fill="#5a8ff0"/><rect x="1398.8" y="411.9" width="55.3" height="4.600" fill="#4b4b4b"/><rect x="1457.1" y="411.9" width="5.0" height="4.600" fill="#d78ff2"/><rect x="1464.9" y="411.9" width="1.6" height="4.600" fill="#5fc46a"/><rect x="1469.6" y="411.9" width="22.4" height="4.600" fill="#5a8ff0"/><rect x="1328.3" y="419.3" width="21.7" height="4.600" fill="#4b4b4b"/><rect x="1353.1" y="419.3" width="4.7" height="4.600" fill="#d78ff2"/><rect x="1360.2" y="419.3" width="2.5" height="4.600" fill="#5fc46a"/><rect x="1365.5" y="419.3" width="22.7" height="4.600" fill="#5a8ff0"/><rect x="1404.3" y="419.3" width="24.8" height="4.600" fill="#4b4b4b"/><rect x="1430.7" y="419.3" width="9.3" height="4.600" fill="#4b4b4b"/><rect x="1441.6" y="419.3" width="28.0" height="4.600" fill="#4b4b4b"/><rect x="1472.7" y="419.3" width="1.9" height="4.600" fill="#5fc46a"/><rect x="1486.6" y="419.3" width="21.7" height="4.600" fill="#5a8ff0"/><rect x="1360.9" y="426.8" width="1.9" height="4.600" fill="#5fc46a"/><rect x="1373.3" y="426.8" width="23.3" height="4.600" fill="#5a8ff0"/><rect x="1488.2" y="426.8" width="14.0" height="4.600" fill="#5fc46a"/><rect x="1505.3" y="426.8" width="21.7" height="4.600" fill="#5a8ff0"/><rect x="1530.1" y="426.8" width="3.1" height="4.600" fill="#4b4b4b"/><rect x="1537.9" y="426.8" width="21.7" height="4.600" fill="#5a8ff0"/><rect x="1363.4" y="434.3" width="2.5" height="4.600" fill="#d78ff2"/><rect x="1371.7" y="434.3" width="21.7" height="4.600" fill="#5a8ff0"/><rect x="1488.2" y="434.3" width="14.0" height="4.600" fill="#5fc46a"/><rect x="1505.3" y="434.3" width="21.7" height="4.600" fill="#5a8ff0"/><rect x="1363.4" y="441.8" width="2.5" height="4.600" fill="#d78ff2"/><rect x="1405.9" y="441.8" width="21.7" height="4.600" fill="#5a8ff0"/><rect x="1429.8" y="441.8" width="1.9" height="4.600" fill="#5fc46a"/><rect x="1435.4" y="441.8" width="23.3" height="4.600" fill="#5a8ff0"/><rect x="1488.2" y="441.8" width="15.5" height="4.600" fill="#5fc46a"/><rect x="1509.9" y="441.8" width="24.2" height="4.600" fill="#5a8ff0"/><rect x="1363.4" y="449.2" width="3.7" height="4.600" fill="#d78ff2"/><rect x="1484.5" y="449.2" width="17.7" height="4.600" fill="#d78ff2"/><rect x="1509.3" y="449.2" width="22.4" height="4.600" fill="#5a8ff0"/><rect x="1364.0" y="456.7" width="6.2" height="4.600" fill="#4b4b4b"/><rect x="1405.9" y="456.7" width="17.1" height="4.600" fill="#5a8ff0"/><rect x="1425.5" y="456.7" width="11.5" height="4.600" fill="#5a8ff0"/><rect x="1441.6" y="456.7" width="24.2" height="4.600" fill="#5a8ff0"/><rect x="1484.5" y="456.7" width="17.7" height="4.600" fill="#d78ff2"/><rect x="1505.3" y="456.7" width="1.6" height="4.600" fill="#5fc46a"/><rect x="1509.3" y="456.7" width="22.4" height="4.600" fill="#5a8ff0"/><rect x="1534.8" y="456.7" width="22.4" height="4.600" fill="#5a8ff0"/><rect x="1870.0" y="329.7" width="222.0" height="4.600" fill="#484848"/><rect x="1898.6" y="337.2" width="1.9" height="4.600" fill="#5fc46a"/><rect x="1902.6" y="337.2" width="23.3" height="4.600" fill="#5a8ff0"/><rect x="2432.7" y="337.2" width="5.6" height="4.600" fill="#5fc46a"/><rect x="2440.8" y="337.2" width="22.4" height="4.600" fill="#5a8ff0"/><rect x="2568.1" y="337.2" width="2.2" height="4.600" fill="#5fc46a"/><rect x="2572.5" y="337.2" width="23.6" height="4.600" fill="#5a8ff0"/><rect x="1898.6" y="344.6" width="2.5" height="4.600" fill="#d78ff2"/><rect x="1904.2" y="344.6" width="2.5" height="4.600" fill="#5fc46a"/><rect x="1908.8" y="344.6" width="22.7" height="4.600" fill="#5a8ff0"/><rect x="2283.7" y="344.6" width="2.5" height="4.600" fill="#5fc46a"/><rect x="2288.6" y="344.6" width="22.4" height="4.600" fill="#5a8ff0"/><rect x="2433.7" y="344.6" width="2.2" height="4.600" fill="#5fc46a"/><rect x="2438.3" y="344.6" width="23.3" height="4.600" fill="#5a8ff0"/><rect x="1898.6" y="352.1" width="8.1" height="4.600" fill="#4b4b4b"/><rect x="1908.8" y="352.1" width="3.1" height="4.600" fill="#d78ff2"/><rect x="1914.1" y="352.1" width="2.5" height="4.600" fill="#5fc46a"/><rect x="1919.7" y="352.1" width="23.3" height="4.600" fill="#5a8ff0"/><rect x="2288.6" y="352.1" width="2.5" height="4.600" fill="#5fc46a"/><rect x="2293.9" y="352.1" width="23.3" height="4.600" fill="#5a8ff0"/><rect x="2438.9" y="352.1" width="2.5" height="4.600" fill="#5fc46a"/><rect x="2443.9" y="352.1" width="22.4" height="4.600" fill="#5a8ff0"/><rect x="1981.2" y="359.6" width="3.7" height="4.600" fill="#d78ff2"/><rect x="1987.4" y="359.6" width="3.1" height="4.600" fill="#5fc46a"/><rect x="1993.0" y="359.6" width="23.0" height="4.600" fill="#5a8ff0"/><rect x="2018.4" y="359.6" width="3.7" height="4.600" fill="#5a8ff0"/><rect x="2086.8" y="367.1" width="3.7" height="4.600" fill="#d78ff2"/><rect x="2093.0" y="367.1" width="3.1" height="4.600" fill="#5fc46a"/><rect x="2098.3" y="367.1" width="25.5" height="4.600" fill="#5a8ff0"/><rect x="1937.7" y="382.0" width="2.5" height="4.600" fill="#5fc46a"/><rect x="1943.0" y="382.0" width="23.3" height="4.600" fill="#5a8ff0"/><rect x="1968.1" y="382.0" width="3.1" height="4.600" fill="#5a8ff0"/><rect x="2015.3" y="382.0" width="54.0" height="4.600" fill="#5fc46a"/><rect x="2071.9" y="382.0" width="23.3" height="4.600" fill="#5a8ff0"/><rect x="2097.3" y="382.0" width="1.9" height="4.600" fill="#5a8ff0"/><rect x="2101.4" y="382.0" width="17.7" height="4.600" fill="#5a8ff0"/><rect x="2121.6" y="382.0" width="23.3" height="4.600" fill="#5a8ff0"/><rect x="2147.3" y="382.0" width="3.1" height="4.600" fill="#5a8ff0"/><rect x="2292.4" y="382.0" width="2.5" height="4.600" fill="#5fc46a"/><rect x="2298.0" y="382.0" width="16.8" height="4.600" fill="#5a8ff0"/><rect x="2317.2" y="382.0" width="6.8" height="4.600" fill="#5a8ff0"/><rect x="2326.5" y="382.0" width="23.3" height="4.600" fill="#5a8ff0"/><rect x="2352.0" y="382.0" width="2.5" height="4.600" fill="#5a8ff0"/><rect x="2369.4" y="382.0" width="2.5" height="4.600" fill="#5fc46a"/><rect x="2374.7" y="382.0" width="23.3" height="4.600" fill="#5a8ff0"/><rect x="2400.4" y="382.0" width="2.5" height="4.600" fill="#5a8ff0"/><rect x="2461.6" y="382.0" width="8.4" height="4.600" fill="#5fc46a"/><rect x="2472.5" y="382.0" width="22.4" height="4.600" fill="#5a8ff0"/><rect x="2498.0" y="382.0" width="14.3" height="4.600" fill="#5a8ff0"/><rect x="2287.7" y="396.9" width="8.4" height="4.600" fill="#5fc46a"/><rect x="2298.6" y="396.9" width="23.3" height="4.600" fill="#5a8ff0"/><rect x="1991.1" y="404.4" width="6.2" height="4.600" fill="#4b4b4b"/><rect x="2002.0" y="404.4" width="2.2" height="4.600" fill="#5fc46a"/><rect x="2006.6" y="404.4" width="80.7" height="4.600" fill="#5a8ff0"/><rect x="2293.9" y="404.4" width="4.0" height="4.600" fill="#5fc46a"/><rect x="2300.1" y="404.4" width="23.3" height="4.600" fill="#5a8ff0"/><rect x="2325.9" y="404.4" width="34.8" height="4.600" fill="#5a8ff0"/><rect x="1991.1" y="411.9" width="6.2" height="4.600" fill="#4b4b4b"/><rect x="1998.9" y="411.9" width="2.2" height="4.600" fill="#5fc46a"/><rect x="2003.5" y="411.9" width="21.7" height="4.600" fill="#5a8ff0"/><rect x="2293.9" y="411.9" width="16.5" height="4.600" fill="#5fc46a"/><rect x="2312.5" y="411.9" width="22.7" height="4.600" fill="#5a8ff0"/><rect x="1989.6" y="419.3" width="7.8" height="4.600" fill="#4b4b4b"/><rect x="2001.1" y="419.3" width="23.3" height="4.600" fill="#5a8ff0"/><rect x="2283.0" y="419.3" width="1.9" height="4.600" fill="#5fc46a"/><rect x="2286.8" y="419.3" width="22.7" height="4.600" fill="#5a8ff0"/><rect x="1898.6" y="456.7" width="1.9" height="4.600" fill="#5fc46a"/><rect x="1902.6" y="456.7" width="23.3" height="4.600" fill="#5a8ff0"/><rect x="1928.4" y="456.7" width="2.2" height="4.600" fill="#5a8ff0"/><rect x="1963.8" y="456.7" width="1.9" height="4.600" fill="#5fc46a"/><rect x="1967.8" y="456.7" width="4.7" height="4.600" fill="#5a8ff0"/><rect x="1975.0" y="456.7" width="11.5" height="4.600" fill="#5a8ff0"/><rect x="1988.6" y="456.7" width="3.1" height="4.600" fill="#5a8ff0"/><rect x="1994.8" y="456.7" width="2.5" height="4.600" fill="#5a8ff0"/><rect x="1998.9" y="456.7" width="28.0" height="4.600" fill="#5a8ff0"/><rect x="2029.0" y="456.7" width="1.9" height="4.600" fill="#5a8ff0"/><rect x="2283.7" y="456.7" width="1.9" height="4.600" fill="#5fc46a"/><rect x="2287.7" y="456.7" width="9.3" height="4.600" fill="#5a8ff0"/><rect x="2300.1" y="456.7" width="10.9" height="4.600" fill="#5a8ff0"/><rect x="2313.5" y="456.7" width="2.2" height="4.600" fill="#5a8ff0"/><rect x="2317.8" y="456.7" width="18.0" height="4.600" fill="#5a8ff0"/><rect x="2338.9" y="456.7" width="21.7" height="4.600" fill="#5a8ff0"/><rect x="2363.8" y="456.7" width="3.1" height="4.600" fill="#5a8ff0"/><rect x="2433.7" y="456.7" width="4.7" height="4.600" fill="#5fc46a"/><rect x="2440.8" y="456.7" width="22.4" height="4.600" fill="#5a8ff0"/><rect x="2465.7" y="456.7" width="9.3" height="4.600" fill="#5a8ff0"/><rect x="2534.0" y="456.7" width="2.5" height="4.600" fill="#5fc46a"/><rect x="2538.3" y="456.7" width="22.7" height="4.600" fill="#5a8ff0"/><rect x="2563.2" y="456.7" width="1.9" height="4.600" fill="#5a8ff0"/><rect x="2574.3" y="456.7" width="2.5" height="4.600" fill="#5fc46a"/><rect x="2578.7" y="456.7" width="24.2" height="4.600" fill="#5a8ff0"/><rect x="2604.5" y="456.7" width="1.6" height="4.600" fill="#5a8ff0"/><rect x="1641.9" y="326" width="3" height="3.600" fill="#282828"/><rect x="1641.9" y="334.400" width="3" height="3.600" fill="#282828"/><rect x="1820.0" y="326" width="3" height="3.600" fill="#282828"/><rect x="1820.0" y="334.400" width="3" height="3.600" fill="#282828"/><rect x="1998.3" y="326" width="3" height="3.600" fill="#282828"/><rect x="1998.3" y="334.400" width="3" height="3.600" fill="#282828"/><rect x="1299.300" y="316" width="2.400" height="150" fill="#f2b8a8"/><rect x="1482" y="316" width="2.400" height="150" fill="#f2b8a8"/><rect x="1356.600" y="316" width="2.400" height="150" fill="#a8c7fa"/><rect x="1372" y="445" width="32" height="20" fill="#1d4672"/><rect x="1376" y="449" width="5" height="13" fill="#fff"/><rect x="1381" y="449" width="8" height="13" fill="#5fc46a"/><rect x="1389" y="449" width="11" height="13" fill="#5a8ff0"/><rect x="2667" y="338" width="3" height="6" fill="#5fc46a"/><rect x="2667" y="345" width="3" height="6" fill="#d78ff2"/><rect x="2667" y="456" width="3" height="6" fill="#5fc46a"/></svg>
<div style="position:absolute;left:1109.2px;top:266px;width:4.8px;height:200px;background:#3a7fc6;"></div>
<div style="position:absolute;left:1109.2px;top:266px;width:12.7px;height:45px;background:#1d4672;box-sizing:border-box;border:1.500px solid #3a7fc6;border-left:0;border-radius:0 8px 8px 0"></div>
<div style="position:absolute;left:1112.2px;top:280px;width:3px;height:17px;background:#a8c7fa;border-radius:1px"></div>
<div class="t" style="left:1158.0px;top:260.0px;color:#e3e3e3;font-size:26px;letter-spacing:0.188px;">20,000 ms</div>
<div class="t" style="left:1335.7px;top:260.0px;color:#e3e3e3;font-size:26px;letter-spacing:0.188px;">40,000 ms</div>
<div class="t" style="left:1513.4px;top:260.0px;color:#e3e3e3;font-size:26px;letter-spacing:0.188px;">60,000 ms</div>
<div class="t" style="left:1691.5px;top:260.0px;color:#e3e3e3;font-size:26px;letter-spacing:0.188px;">80,000 ms</div>
<div class="t" style="left:1857.3px;top:260.0px;color:#e3e3e3;font-size:26px;">100,000 ms</div>
<div class="t" style="left:2035.1px;top:260.0px;color:#e3e3e3;font-size:26px;">120,000 ms</div>
<div class="t" style="left:2212.8px;top:260.0px;color:#e3e3e3;font-size:26px;">140,000 ms</div>
<div class="t" style="left:2392.8px;top:260.0px;color:#e3e3e3;font-size:26px;">160,000 ms</div>
<div class="t" style="left:2569.5px;top:260.0px;color:#e3e3e3;font-size:26px;letter-spacing:0.500px;">180,000</div>
<div style="position:absolute;left:1109px;top:502.25px;width:502.5px;height:52.5px;background:#1f1f1f;"></div>
<svg style="position:absolute;left:1121px;top:512.50px" width="36" height="32" viewBox="0 0 36 32" fill="none" stroke="#ee9a6b" stroke-width="3.700"><path d="M12.800 5.800H11.300a3.300 3.300 0 0 0-3.300 3.300v3.600c0 1.900-1.200 3-3.200 3v1.400c2 0 3.200 1.100 3.200 3v3.600a3.300 3.300 0 0 0 3.300 3.300h1.500M23.200 5.800h1.500a3.300 3.300 0 0 1 3.300 3.300v3.600c0 1.900 1.200 3 3.200 3v1.400c-2 0-3.200 1.100-3.200 3v3.600a3.300 3.300 0 0 1-3.300 3.300h-1.500"/><path d="M18 10.300v3.400M18.100 17.800v2.800l-1.400 2.800" stroke-width="3.500"/></svg>
<div style="position:absolute;left:1109px;top:554.75px;width:502.5px;height:52.5px;background:#292a2d;"></div>
<svg style="position:absolute;left:1121px;top:565.00px" width="36" height="32" viewBox="0 0 36 32" fill="none" stroke="#ee9a6b" stroke-width="3.700"><path d="M12.800 5.800H11.300a3.300 3.300 0 0 0-3.300 3.300v3.600c0 1.900-1.200 3-3.200 3v1.400c2 0 3.200 1.100 3.200 3v3.600a3.300 3.300 0 0 0 3.300 3.300h1.500M23.200 5.800h1.500a3.300 3.300 0 0 1 3.300 3.300v3.600c0 1.900 1.200 3 3.200 3v1.400c-2 0-3.200 1.100-3.200 3v3.600a3.300 3.300 0 0 1-3.300 3.300h-1.500"/><path d="M18 10.300v3.400M18.100 17.800v2.800l-1.400 2.800" stroke-width="3.500"/></svg>
<div style="position:absolute;left:1109px;top:607.25px;width:502.5px;height:52.5px;background:#1f1f1f;"></div>
<svg style="position:absolute;left:1124px;top:617.0px" width="32" height="32" viewBox="0 0 32 32" fill="none" stroke="#d0d0d0" stroke-width="3"><path d="M5 2.500h14.500L27.500 10.500V27a2 2 0 0 1-2 2H5a2 2 0 0 1-2-2V4.500a2 2 0 0 1 2-2ZM19 3v8h8"/></svg>
<div style="position:absolute;left:1109px;top:659.75px;width:502.5px;height:52.5px;background:#292a2d;"></div>
<svg style="position:absolute;left:1121px;top:670.00px" width="36" height="32" viewBox="0 0 36 32" fill="none" stroke="#ee9a6b" stroke-width="3.700"><path d="M12.800 5.800H11.300a3.300 3.300 0 0 0-3.300 3.300v3.600c0 1.900-1.200 3-3.200 3v1.400c2 0 3.200 1.100 3.200 3v3.600a3.300 3.300 0 0 0 3.300 3.300h1.500M23.200 5.800h1.500a3.300 3.300 0 0 1 3.300 3.300v3.600c0 1.900 1.200 3 3.200 3v1.400c-2 0-3.200 1.100-3.200 3v3.600a3.300 3.300 0 0 1-3.300 3.300h-1.500"/><path d="M18 10.300v3.400M18.100 17.800v2.800l-1.400 2.800" stroke-width="3.500"/></svg>
<div style="position:absolute;left:1109px;top:712.25px;width:502.5px;height:52.5px;background:#1f1f1f;"></div>
<svg style="position:absolute;left:1121px;top:722.50px" width="36" height="32" viewBox="0 0 36 32" fill="none" stroke="#ee9a6b" stroke-width="3.700"><path d="M12.800 5.800H11.300a3.300 3.300 0 0 0-3.300 3.300v3.600c0 1.900-1.200 3-3.200 3v1.400c2 0 3.200 1.100 3.200 3v3.600a3.300 3.300 0 0 0 3.300 3.300h1.500M23.200 5.800h1.500a3.300 3.300 0 0 1 3.300 3.300v3.600c0 1.900 1.200 3 3.200 3v1.400c-2 0-3.200 1.100-3.200 3v3.600a3.300 3.300 0 0 1-3.300 3.300h-1.500"/><path d="M18 10.300v3.400M18.100 17.800v2.800l-1.400 2.800" stroke-width="3.500"/></svg>
<div style="position:absolute;left:1109px;top:764.75px;width:502.5px;height:52.5px;background:#292a2d;"></div>
<svg style="position:absolute;left:1124px;top:774.5px" width="32" height="32" viewBox="0 0 32 32" fill="none" stroke="#d0d0d0" stroke-width="3"><path d="M5 2.500h14.500L27.500 10.500V27a2 2 0 0 1-2 2H5a2 2 0 0 1-2-2V4.500a2 2 0 0 1 2-2ZM19 3v8h8"/></svg>
<div style="position:absolute;left:1109px;top:817.25px;width:502.5px;height:52.5px;background:#1f1f1f;"></div>
<svg style="position:absolute;left:1121px;top:827.50px" width="36" height="32" viewBox="0 0 36 32" fill="none" stroke="#ee9a6b" stroke-width="3.700"><path d="M12.800 5.800H11.300a3.300 3.300 0 0 0-3.300 3.300v3.600c0 1.900-1.200 3-3.200 3v1.400c2 0 3.200 1.100 3.200 3v3.600a3.300 3.300 0 0 0 3.300 3.300h1.500M23.200 5.800h1.500a3.300 3.300 0 0 1 3.300 3.300v3.600c0 1.900 1.200 3 3.200 3v1.400c-2 0-3.200 1.100-3.200 3v3.600a3.300 3.300 0 0 1-3.300 3.300h-1.500"/><path d="M18 10.300v3.400M18.100 17.800v2.800l-1.400 2.800" stroke-width="3.500"/></svg>
<div style="position:absolute;left:1109px;top:869.75px;width:502.5px;height:52.5px;background:#292a2d;"></div>
<svg style="position:absolute;left:1121px;top:880.00px" width="36" height="32" viewBox="0 0 36 32" fill="none" stroke="#ee9a6b" stroke-width="3.700"><path d="M12.800 5.800H11.300a3.300 3.300 0 0 0-3.300 3.300v3.600c0 1.900-1.200 3-3.200 3v1.400c2 0 3.200 1.100 3.200 3v3.600a3.300 3.300 0 0 0 3.300 3.300h1.500M23.200 5.800h1.500a3.300 3.300 0 0 1 3.300 3.300v3.600c0 1.900 1.200 3 3.200 3v1.400c-2 0-3.200 1.100-3.200 3v3.600a3.300 3.300 0 0 1-3.300 3.300h-1.500"/><path d="M18 10.300v3.400M18.100 17.800v2.800l-1.400 2.800" stroke-width="3.500"/></svg>
<div style="position:absolute;left:1109px;top:922.25px;width:502.5px;height:52.5px;background:#1f1f1f;"></div>
<svg style="position:absolute;left:1121px;top:932.50px" width="36" height="32" viewBox="0 0 36 32" fill="none" stroke="#ee9a6b" stroke-width="3.700"><path d="M12.800 5.800H11.300a3.300 3.300 0 0 0-3.300 3.300v3.600c0 1.900-1.200 3-3.200 3v1.400c2 0 3.200 1.100 3.200 3v3.600a3.300 3.300 0 0 0 3.300 3.300h1.500M23.200 5.800h1.500a3.300 3.300 0 0 1 3.300 3.300v3.600c0 1.900 1.200 3 3.200 3v1.400c-2 0-3.200 1.100-3.200 3v3.600a3.300 3.300 0 0 1-3.300 3.300h-1.500"/><path d="M18 10.300v3.400M18.100 17.800v2.800l-1.400 2.800" stroke-width="3.500"/></svg>
<div style="position:absolute;left:1109px;top:974.75px;width:502.5px;height:52.5px;background:#292a2d;"></div>
<svg style="position:absolute;left:1121px;top:985.00px" width="36" height="32" viewBox="0 0 36 32" fill="none" stroke="#ee9a6b" stroke-width="3.700"><path d="M12.800 5.800H11.300a3.300 3.300 0 0 0-3.300 3.300v3.600c0 1.900-1.200 3-3.200 3v1.400c2 0 3.200 1.100 3.200 3v3.600a3.300 3.300 0 0 0 3.300 3.300h1.500M23.200 5.800h1.500a3.300 3.300 0 0 1 3.300 3.300v3.600c0 1.900 1.200 3 3.200 3v1.400c-2 0-3.200 1.100-3.200 3v3.600a3.300 3.300 0 0 1-3.300 3.300h-1.500"/><path d="M18 10.300v3.400M18.100 17.800v2.800l-1.400 2.800" stroke-width="3.500"/></svg>
<div style="position:absolute;left:1109px;top:1027.25px;width:502.5px;height:52.5px;background:#1f1f1f;"></div>
<svg style="position:absolute;left:1121px;top:1037.50px" width="36" height="32" viewBox="0 0 36 32" fill="none" stroke="#ee9a6b" stroke-width="3.700"><path d="M12.800 5.800H11.300a3.300 3.300 0 0 0-3.300 3.300v3.600c0 1.900-1.200 3-3.200 3v1.400c2 0 3.200 1.100 3.200 3v3.600a3.300 3.300 0 0 0 3.300 3.300h1.500M23.200 5.800h1.500a3.300 3.300 0 0 1 3.300 3.300v3.600c0 1.900 1.200 3 3.200 3v1.400c-2 0-3.200 1.100-3.200 3v3.600a3.300 3.300 0 0 1-3.300 3.300h-1.500"/><path d="M18 10.300v3.400M18.100 17.800v2.800l-1.400 2.800" stroke-width="3.500"/></svg>
<div style="position:absolute;left:1109px;top:1079.75px;width:502.5px;height:52.5px;background:#292a2d;"></div>
<svg style="position:absolute;left:1121px;top:1090.00px" width="36" height="32" viewBox="0 0 36 32" fill="none" stroke="#ee9a6b" stroke-width="3.700"><path d="M12.800 5.800H11.300a3.300 3.300 0 0 0-3.300 3.300v3.600c0 1.900-1.200 3-3.200 3v1.400c2 0 3.200 1.100 3.200 3v3.600a3.300 3.300 0 0 0 3.300 3.300h1.500M23.200 5.800h1.500a3.300 3.300 0 0 1 3.300 3.300v3.600c0 1.900 1.200 3 3.200 3v1.400c-2 0-3.200 1.100-3.200 3v3.600a3.300 3.300 0 0 1-3.300 3.300h-1.500"/><path d="M18 10.300v3.400M18.100 17.800v2.800l-1.400 2.800" stroke-width="3.500"/></svg>
<div style="position:absolute;left:1109px;top:1132.25px;width:502.5px;height:52.5px;background:#1f1f1f;"></div>
<svg style="position:absolute;left:1121px;top:1142.50px" width="36" height="32" viewBox="0 0 36 32" fill="none" stroke="#ee9a6b" stroke-width="3.700"><path d="M12.800 5.800H11.300a3.300 3.300 0 0 0-3.300 3.300v3.600c0 1.900-1.200 3-3.200 3v1.400c2 0 3.200 1.100 3.200 3v3.600a3.300 3.300 0 0 0 3.300 3.300h1.500M23.200 5.800h1.500a3.300 3.300 0 0 1 3.300 3.300v3.600c0 1.900 1.200 3 3.200 3v1.400c-2 0-3.200 1.100-3.200 3v3.600a3.300 3.300 0 0 1-3.300 3.300h-1.500"/><path d="M18 10.300v3.400M18.100 17.800v2.800l-1.400 2.800" stroke-width="3.500"/></svg>
<div style="position:absolute;left:1109px;top:1184.75px;width:502.5px;height:52.5px;background:#474747;"></div>
<svg style="position:absolute;left:1121px;top:1195.00px" width="36" height="32" viewBox="0 0 36 32" fill="none" stroke="#ee9a6b" stroke-width="3.700"><path d="M12.800 5.800H11.300a3.300 3.300 0 0 0-3.300 3.300v3.600c0 1.900-1.200 3-3.200 3v1.400c2 0 3.200 1.100 3.200 3v3.600a3.300 3.300 0 0 0 3.300 3.300h1.500M23.200 5.800h1.500a3.300 3.300 0 0 1 3.300 3.300v3.600c0 1.900 1.200 3 3.200 3v1.400c-2 0-3.200 1.100-3.200 3v3.600a3.300 3.300 0 0 1-3.300 3.300h-1.500"/><path d="M18 10.300v3.400M18.100 17.800v2.800l-1.400 2.800" stroke-width="3.500"/></svg>
<div style="position:absolute;left:1109px;top:1237.25px;width:502.5px;height:52.5px;background:#1f1f1f;"></div>
<svg style="position:absolute;left:1121px;top:1247.50px" width="36" height="32" viewBox="0 0 36 32" fill="none" stroke="#ee9a6b" stroke-width="3.700"><path d="M12.800 5.800H11.300a3.300 3.300 0 0 0-3.300 3.300v3.600c0 1.900-1.200 3-3.200 3v1.400c2 0 3.200 1.100 3.200 3v3.600a3.300 3.300 0 0 0 3.300 3.300h1.500M23.200 5.800h1.500a3.300 3.300 0 0 1 3.300 3.300v3.600c0 1.900 1.200 3 3.200 3v1.400c-2 0-3.200 1.100-3.200 3v3.600a3.300 3.300 0 0 1-3.300 3.300h-1.500"/><path d="M18 10.300v3.400M18.100 17.800v2.800l-1.400 2.800" stroke-width="3.500"/></svg>
<div style="position:absolute;left:1109px;top:1289.75px;width:502.5px;height:52.5px;background:#292a2d;"></div>
<svg style="position:absolute;left:1121px;top:1300.00px" width="36" height="32" viewBox="0 0 36 32" fill="none" stroke="#ee9a6b" stroke-width="3.700"><path d="M12.800 5.800H11.300a3.300 3.300 0 0 0-3.300 3.300v3.600c0 1.900-1.200 3-3.200 3v1.400c2 0 3.200 1.100 3.200 3v3.600a3.300 3.300 0 0 0 3.300 3.300h1.500M23.200 5.800h1.500a3.300 3.300 0 0 1 3.300 3.300v3.600c0 1.900 1.200 3 3.200 3v1.400c-2 0-3.200 1.100-3.200 3v3.600a3.300 3.300 0 0 1-3.300 3.300h-1.500"/><path d="M18 10.300v3.400M18.100 17.800v2.800l-1.400 2.800" stroke-width="3.500"/></svg>
<div style="position:absolute;left:1109px;top:1342.25px;width:502.5px;height:52.5px;background:#1f1f1f;"></div>
<svg style="position:absolute;left:1121px;top:1352.50px" width="36" height="32" viewBox="0 0 36 32" fill="none" stroke="#ee9a6b" stroke-width="3.700"><path d="M12.800 5.800H11.300a3.300 3.300 0 0 0-3.300 3.300v3.600c0 1.900-1.200 3-3.200 3v1.400c2 0 3.200 1.100 3.200 3v3.600a3.300 3.300 0 0 0 3.300 3.300h1.500M23.200 5.800h1.500a3.300 3.300 0 0 1 3.300 3.300v3.600c0 1.900 1.200 3 3.200 3v1.400c-2 0-3.200 1.100-3.200 3v3.600a3.300 3.300 0 0 1-3.300 3.300h-1.500"/><path d="M18 10.300v3.400M18.100 17.800v2.800l-1.400 2.800" stroke-width="3.500"/></svg>
<div style="position:absolute;left:1109px;top:1394.75px;width:502.5px;height:52.5px;background:#292a2d;"></div>
<svg style="position:absolute;left:1121px;top:1405.00px" width="36" height="32" viewBox="0 0 36 32" fill="none" stroke="#ee9a6b" stroke-width="3.700"><path d="M12.800 5.800H11.300a3.300 3.300 0 0 0-3.300 3.300v3.600c0 1.900-1.200 3-3.200 3v1.400c2 0 3.200 1.100 3.200 3v3.600a3.300 3.300 0 0 0 3.300 3.300h1.500M23.200 5.800h1.500a3.300 3.300 0 0 1 3.300 3.300v3.600c0 1.900 1.200 3 3.200 3v1.400c-2 0-3.200 1.100-3.200 3v3.600a3.300 3.300 0 0 1-3.300 3.300h-1.500"/><path d="M18 10.300v3.400M18.100 17.800v2.800l-1.400 2.800" stroke-width="3.500"/></svg>
<div style="position:absolute;left:1109px;top:1447.25px;width:502.5px;height:52.5px;background:#1f1f1f;"></div>
<svg style="position:absolute;left:1121px;top:1457.50px" width="36" height="32" viewBox="0 0 36 32" fill="none" stroke="#ee9a6b" stroke-width="3.700"><path d="M12.800 5.800H11.300a3.300 3.300 0 0 0-3.300 3.300v3.600c0 1.900-1.200 3-3.200 3v1.400c2 0 3.200 1.100 3.200 3v3.600a3.300 3.300 0 0 0 3.300 3.300h1.500M23.200 5.800h1.500a3.300 3.300 0 0 1 3.300 3.300v3.600c0 1.900 1.200 3 3.200 3v1.400c-2 0-3.200 1.100-3.200 3v3.600a3.300 3.300 0 0 1-3.300 3.300h-1.500"/><path d="M18 10.300v3.400M18.100 17.800v2.800l-1.400 2.800" stroke-width="3.500"/></svg>
<div class="t" style="left:1165.0px;top:499.7px;color:#e3e3e3;font-size:30px;letter-spacing:2.333px;">list</div>
<div class="t" style="left:1165.0px;top:552.2px;color:#e3e3e3;font-size:30px;letter-spacing:2.333px;">list</div>
<div class="t" style="left:1167.0px;top:604.7px;color:#e3e3e3;font-size:30px;letter-spacing:1.250px;">token</div>
<div class="t" style="left:1166.0px;top:657.2px;color:#e3e3e3;font-size:30px;letter-spacing:0.857px;">query_item_categories?item...</div>
<div class="t" style="left:1166.0px;top:709.7px;color:#e3e3e3;font-size:30px;letter-spacing:1.038px;">count?aid=2608&amp;uuid=7116...</div>
<div class="t" style="left:1165.0px;top:762.2px;color:#e3e3e3;font-size:30px;letter-spacing:1.143px;">index.js</div>
<div class="t" style="left:1165.0px;top:814.7px;color:#e3e3e3;font-size:30px;letter-spacing:1.037px;">pin_tab_lead?aid=2608&amp;uui...</div>
<div class="t" style="left:1166.0px;top:867.2px;color:#e3e3e3;font-size:30px;letter-spacing:1.038px;">count?aid=2608&amp;uuid=7116...</div>
<div class="t" style="left:1166.0px;top:919.7px;color:#e3e3e3;font-size:30px;letter-spacing:1.385px;">abtest_config/</div>
<div class="t" style="left:1165.0px;top:972.2px;color:#e3e3e3;font-size:30px;letter-spacing:1.143px;">profile_id?aid=2608&amp;uuid=7...</div>
<div class="t" style="left:1165.0px;top:1024.7px;color:#e3e3e3;font-size:30px;letter-spacing:1.038px;">hot?aid=2608&amp;uuid=711678...</div>
<div class="t" style="left:1167.0px;top:1077.2px;color:#e3e3e3;font-size:30px;letter-spacing:0.846px;">task?aid=2608&amp;uuid=71167...</div>
<div class="t" style="left:1165.0px;top:1129.7px;color:#e3e3e3;font-size:30px;letter-spacing:1.107px;">list_by_rec?aid=2608&amp;uuid=...</div>
<div class="t" style="left:1165.0px;top:1182.2px;color:#e3e3e3;font-size:30px;letter-spacing:1.160px;">recommend?aid=2608&amp;uuid...</div>
<div class="t" style="left:1165.0px;top:1234.7px;color:#e3e3e3;font-size:30px;letter-spacing:1.107px;">list_by_hot?aid=2608&amp;uuid=...</div>
<div class="t" style="left:1165.0px;top:1287.2px;color:#e3e3e3;font-size:30px;letter-spacing:1.107px;">list_by_hot?aid=2608&amp;uuid=...</div>
<div class="t" style="left:1167.0px;top:1339.7px;color:#e3e3e3;font-size:30px;letter-spacing:1.143px;">topic_list?aid=2608&amp;uuid=7...</div>
<div class="t" style="left:1166.0px;top:1392.2px;color:#e3e3e3;font-size:30px;letter-spacing:0.846px;">shows?aid=2608&amp;uuid=7116...</div>
<div class="t" style="left:1166.0px;top:1444.7px;color:#e3e3e3;font-size:30px;letter-spacing:-4.273px;">get?aid=2608</div>
<div style="position:absolute;left:1614.5px;top:536px;width:1056px;height:912px;background:#282828;"></div>
<div style="position:absolute;left:2029px;top:1057.2px;width:316px;height:32px;background:#1f4a7d;"></div>
<div style="position:absolute;left:1757px;top:536px;width:2.2px;height:912px;background:#5a5a5a;"></div>
<div style="position:absolute;left:1823.2px;top:536px;width:2.2px;height:912px;background:#5a5a5a;"></div>
<div style="position:absolute;left:1889.5px;top:536px;width:2.2px;height:912px;background:#5a5a5a;"></div>
<div style="position:absolute;left:1955.8px;top:536px;width:2.2px;height:864px;background:#5a5a5a;"></div>
<div style="position:absolute;left:1690.5px;top:536.0px;width:15.5px;height:2.4px;background:#9db8e8;"></div>
<div style="position:absolute;left:1690.5px;top:574.45px;width:15.5px;height:2.4px;background:#9db8e8;"></div>
<div style="position:absolute;left:1690.5px;top:612.9px;width:15.5px;height:2.4px;background:#9db8e8;"></div>
<div style="position:absolute;left:1690.5px;top:651.35px;width:15.5px;height:2.4px;background:#9db8e8;"></div>
<div style="position:absolute;left:1690.5px;top:689.8000000000001px;width:15.5px;height:2.4px;background:#9db8e8;"></div>
<div style="position:absolute;left:1690.5px;top:728.25px;width:15.5px;height:2.4px;background:#9db8e8;"></div>
<div style="position:absolute;left:1690.5px;top:766.7px;width:15.5px;height:2.4px;background:#9db8e8;"></div>
<div style="position:absolute;left:1690.5px;top:805.15px;width:15.5px;height:2.4px;background:#9db8e8;"></div>
<div style="position:absolute;left:1690.5px;top:843.6px;width:15.5px;height:2.4px;background:#9db8e8;"></div>
<div style="position:absolute;left:1690.5px;top:882.0500000000001px;width:15.5px;height:2.4px;background:#9db8e8;"></div>
<div style="position:absolute;left:1690.5px;top:920.5px;width:15.5px;height:2.4px;background:#9db8e8;"></div>
<div style="position:absolute;left:1690.5px;top:958.95px;width:15.5px;height:2.4px;background:#9db8e8;"></div>
<div style="position:absolute;left:1690.5px;top:997.4px;width:15.5px;height:2.4px;background:#9db8e8;"></div>
<div style="position:absolute;left:1690.5px;top:1035.85px;width:15.5px;height:2.4px;background:#9db8e8;"></div>
<div style="position:absolute;left:1690.5px;top:1074.3px;width:15.5px;height:2.4px;background:#9db8e8;"></div>
<div style="position:absolute;left:1690.5px;top:1112.75px;width:15.5px;height:2.4px;background:#9db8e8;"></div>
<div style="position:absolute;left:1690.5px;top:1151.1999999999998px;width:15.5px;height:2.4px;background:#9db8e8;"></div>
<div style="position:absolute;left:1690.5px;top:1189.65px;width:15.5px;height:2.4px;background:#9db8e8;"></div>
<div style="position:absolute;left:1690.5px;top:1228.1px;width:15.5px;height:2.4px;background:#9db8e8;"></div>
<div style="position:absolute;left:1690.5px;top:1266.55px;width:15.5px;height:2.4px;background:#9db8e8;"></div>
<div style="position:absolute;left:1690.5px;top:1305.0px;width:15.5px;height:2.4px;background:#9db8e8;"></div>
<div style="position:absolute;left:1690.5px;top:1343.4499999999998px;width:15.5px;height:2.4px;background:#9db8e8;"></div>
<div style="position:absolute;left:1690.5px;top:1381.9px;width:15.5px;height:2.4px;background:#9db8e8;"></div>
<div style="position:absolute;left:1690.5px;top:1420.35px;width:15.5px;height:2.4px;background:#9db8e8;"></div>
<div style="position:absolute;left:1690.5px;top:1458.8px;width:15.5px;height:2.4px;background:#9db8e8;"></div>
<div class="t m" style="left:2028.3px;top:504.9px;font-size:27.500px;color:#e3e3e3;-webkit-text-stroke:0.45px"><span style="color:#f0986a">"id"</span><span style="color:#e3e3e3">: </span><span style="color:#b9e6c9">3008366</span><span style="color:#e3e3e3">,</span></div><div class="t m" style="left:2028.3px;top:543.4px;font-size:27.500px;color:#e3e3e3;-webkit-text-stroke:0.45px"><span style="color:#f0986a">"msg_id"</span><span style="color:#e3e3e3">: </span><span style="color:#f0986a">"7535482514686902287"</span><span style="color:#e3e3e3">,</span></div><div class="t m" style="left:2028.3px;top:581.8px;font-size:27.500px;color:#e3e3e3;-webkit-text-stroke:0.45px"><span style="color:#f0986a">"user_id"</span><span style="color:#e3e3e3">: </span><span style="color:#f0986a">"1357244785244392"</span><span style="color:#e3e3e3">,</span></div><div class="t m" style="left:2028.3px;top:620.2px;font-size:27.500px;color:#e3e3e3;-webkit-text-stroke:0.45px"><span style="color:#f0986a">"topic_id"</span><span style="color:#e3e3e3">: </span><span style="color:#f0986a">"0"</span><span style="color:#e3e3e3">,</span></div><div class="t m" style="left:2028.3px;top:658.7px;font-size:27.500px;color:#e3e3e3;-webkit-text-stroke:0.45px"><span style="color:#f0986a">"content"</span><span style="color:#e3e3e3">: </span><span style="color:#f0986a">"苟在大城市，还是退居小城市，你怎么看"</span><span style="color:#e3e3e3">,</span></div><div class="t m" style="left:2028.3px;top:697.1px;font-size:27.500px;color:#e3e3e3;-webkit-text-stroke:0.45px"><span style="color:#f0986a">"pic_list"</span><span style="color:#e3e3e3">: [],</span></div><div class="t m" style="left:2028.3px;top:735.6px;font-size:27.500px;color:#e3e3e3;-webkit-text-stroke:0.45px"><span style="color:#f0986a">"url"</span><span style="color:#e3e3e3">: </span><span style="color:#f0986a">""</span><span style="color:#e3e3e3">,</span></div><div class="t m" style="left:2028.3px;top:774.0px;font-size:27.500px;color:#e3e3e3;-webkit-text-stroke:0.45px"><span style="color:#f0986a">"url_title"</span><span style="color:#e3e3e3">: </span><span style="color:#f0986a">""</span><span style="color:#e3e3e3">,</span></div><div class="t m" style="left:2028.3px;top:812.5px;font-size:27.500px;color:#e3e3e3;-webkit-text-stroke:0.45px"><span style="color:#f0986a">"url_pic"</span><span style="color:#e3e3e3">: </span><span style="color:#f0986a">""</span><span style="color:#e3e3e3">,</span></div><div class="t m" style="left:2028.3px;top:851.0px;font-size:27.500px;color:#e3e3e3;-webkit-text-stroke:0.45px"><span style="color:#f0986a">"verify_status"</span><span style="color:#e3e3e3">: </span><span style="color:#b9e6c9">1</span><span style="color:#e3e3e3">,</span></div><div class="t m" style="left:2028.3px;top:889.4px;font-size:27.500px;color:#e3e3e3;-webkit-text-stroke:0.45px"><span style="color:#f0986a">"status"</span><span style="color:#e3e3e3">: </span><span style="color:#b9e6c9">2</span><span style="color:#e3e3e3">,</span></div><div class="t m" style="left:2028.3px;top:927.9px;font-size:27.500px;color:#e3e3e3;-webkit-text-stroke:0.45px"><span style="color:#f0986a">"ctime"</span><span style="color:#e3e3e3">: </span><span style="color:#f0986a">"1754535099"</span><span style="color:#e3e3e3">,</span></div><div class="t m" style="left:2028.3px;top:966.3px;font-size:27.500px;color:#e3e3e3;-webkit-text-stroke:0.45px"><span style="color:#f0986a">"mtime"</span><span style="color:#e3e3e3">: </span><span style="color:#f0986a">"1754535252"</span><span style="color:#e3e3e3">,</span></div><div class="t m" style="left:2028.3px;top:1004.8px;font-size:27.500px;color:#e3e3e3;-webkit-text-stroke:0.45px"><span style="color:#f0986a">"rtime"</span><span style="color:#e3e3e3">: </span><span style="color:#f0986a">"1754535252"</span><span style="color:#e3e3e3">,</span></div><div class="t m" style="left:2028.3px;top:1043.2px;font-size:27.500px;color:#e3e3e3;-webkit-text-stroke:0.45px"><span style="color:#f0986a">"comment_count"</span><span style="color:#e3e3e3">: </span><span style="color:#b9e6c9">0</span><span style="color:#e3e3e3">,</span></div><div class="t m" style="left:2028.3px;top:1081.7px;font-size:27.500px;color:#e3e3e3;-webkit-text-stroke:0.45px"><span style="color:#f0986a">"digg_count"</span><span style="color:#e3e3e3">: </span><span style="color:#b9e6c9">0</span><span style="color:#e3e3e3">,</span></div><div class="t m" style="left:2028.3px;top:1120.1px;font-size:27.500px;color:#e3e3e3;-webkit-text-stroke:0.45px"><span style="color:#f0986a">"hot_index"</span><span style="color:#e3e3e3">: </span><span style="color:#b9e6c9">0</span><span style="color:#e3e3e3">,</span></div><div class="t m" style="left:2028.3px;top:1158.6px;font-size:27.500px;color:#e3e3e3;-webkit-text-stroke:0.45px"><span style="color:#f0986a">"rank_index"</span><span style="color:#e3e3e3">: </span><span style="color:#b9e6c9">0</span><span style="color:#e3e3e3">,</span></div><div class="t m" style="left:2028.3px;top:1197.0px;font-size:27.500px;color:#e3e3e3;-webkit-text-stroke:0.45px"><span style="color:#f0986a">"comment_score"</span><span style="color:#e3e3e3">: </span><span style="color:#b9e6c9">0</span><span style="color:#e3e3e3">,</span></div><div class="t m" style="left:2028.3px;top:1235.5px;font-size:27.500px;color:#e3e3e3;-webkit-text-stroke:0.45px"><span style="color:#f0986a">"is_advert_recommend"</span><span style="color:#e3e3e3">: </span><span style="color:#b9e6c9">false</span><span style="color:#e3e3e3">,</span></div><div class="t m" style="left:2028.3px;top:1273.9px;font-size:27.500px;color:#e3e3e3;-webkit-text-stroke:0.45px"><span style="color:#f0986a">"audit_status"</span><span style="color:#e3e3e3">: </span><span style="color:#b9e6c9">2</span><span style="color:#e3e3e3">,</span></div><div class="t m" style="left:2028.3px;top:1312.3px;font-size:27.500px;color:#e3e3e3;-webkit-text-stroke:0.45px"><span style="color:#f0986a">"theme_id"</span><span style="color:#e3e3e3">: </span><span style="color:#f0986a">"0"</span><span style="color:#e3e3e3">,</span></div><div class="t m" style="left:2028.3px;top:1350.8px;font-size:27.500px;color:#e3e3e3;-webkit-text-stroke:0.45px"><span style="color:#f0986a">"jcode_id"</span><span style="color:#e3e3e3">: </span><span style="color:#f0986a">"0"</span></div><div class="t m" style="left:1962.1px;top:1389.2px;font-size:27.500px;color:#e3e3e3;-webkit-text-stroke:0.45px"><span style="color:#e3e3e3">},</span></div><div class="t m" style="left:1962.1px;top:1427.7px;font-size:27.500px;color:#e3e3e3;-webkit-text-stroke:0.45px"><span style="color:#f0986a">"author_user_info"</span><span style="color:#e3e3e3">: {</span></div>
<div style="position:absolute;left:1109px;top:466.5px;width:504px;height:69px;background:#292a2d;box-sizing:border-box;border:2px solid #5e5e5e"></div>
<div style="position:absolute;left:1611.5px;top:466.5px;width:2.5px;height:982px;background:#5e5e5e;"></div>
<div class="t" style="left:1119.5px;top:472.0px;color:#e3e3e3;font-size:30px;letter-spacing:0.833px;">Name</div>
<div style="position:absolute;left:1614.5px;top:466.5px;width:1056px;height:67px;background:#3c3c3c;"></div>
<div style="position:absolute;left:1614.5px;top:533.5px;width:1056px;height:2px;background:#5c5c5c;"></div>
<div style="position:absolute;left:1108px;top:465.5px;width:1562px;height:2px;background:#5e5e5e;"></div>
<svg style="position:absolute;left:1650px;top:488px" width="28" height="28" viewBox="0 0 28 28" fill="none" stroke="#c7c7c7" stroke-width="3.200"><path d="M3 3l22 22M25 3L3 25"/></svg>
<div style="position:absolute;left:2206px;top:530.5px;width:193.5px;height:5.5px;background:#a8c7fa;border-radius:5px 5px 0 0"></div>
<div class="t" style="left:1728.4px;top:473.5px;color:#c7c7c7;font-size:31px;letter-spacing:0.833px;-webkit-text-stroke:.9px;">Headers</div>
<div class="t" style="left:1900.6px;top:473.5px;color:#c7c7c7;font-size:31px;letter-spacing:0.483px;-webkit-text-stroke:.9px;">Payload</div>
<div class="t" style="left:2065.8px;top:473.5px;color:#c7c7c7;font-size:31px;letter-spacing:0.633px;-webkit-text-stroke:.9px;">Preview</div>
<div class="t" style="left:2230.7px;top:473.5px;color:#a8c7fa;font-size:31px;letter-spacing:0.400px;-webkit-text-stroke:.9px;">Response</div>
<div class="t" style="left:2422.0px;top:473.5px;color:#c7c7c7;font-size:31px;letter-spacing:1.450px;-webkit-text-stroke:.9px;">Initiator</div>
<div class="t" style="left:2586.4px;top:473.5px;color:#c7c7c7;font-size:31px;letter-spacing:1.520px;-webkit-text-stroke:.9px;">Timing</div>
<div class="t" style="left:2273.0px;top:1368.0px;color:#e6e6e6;font-size:26px;letter-spacing:-1.200px;text-shadow:0 0 3px rgba(0,0,0,.6);">掘金技术社区 @ 能摸一天是一天</div>
</body></html>
